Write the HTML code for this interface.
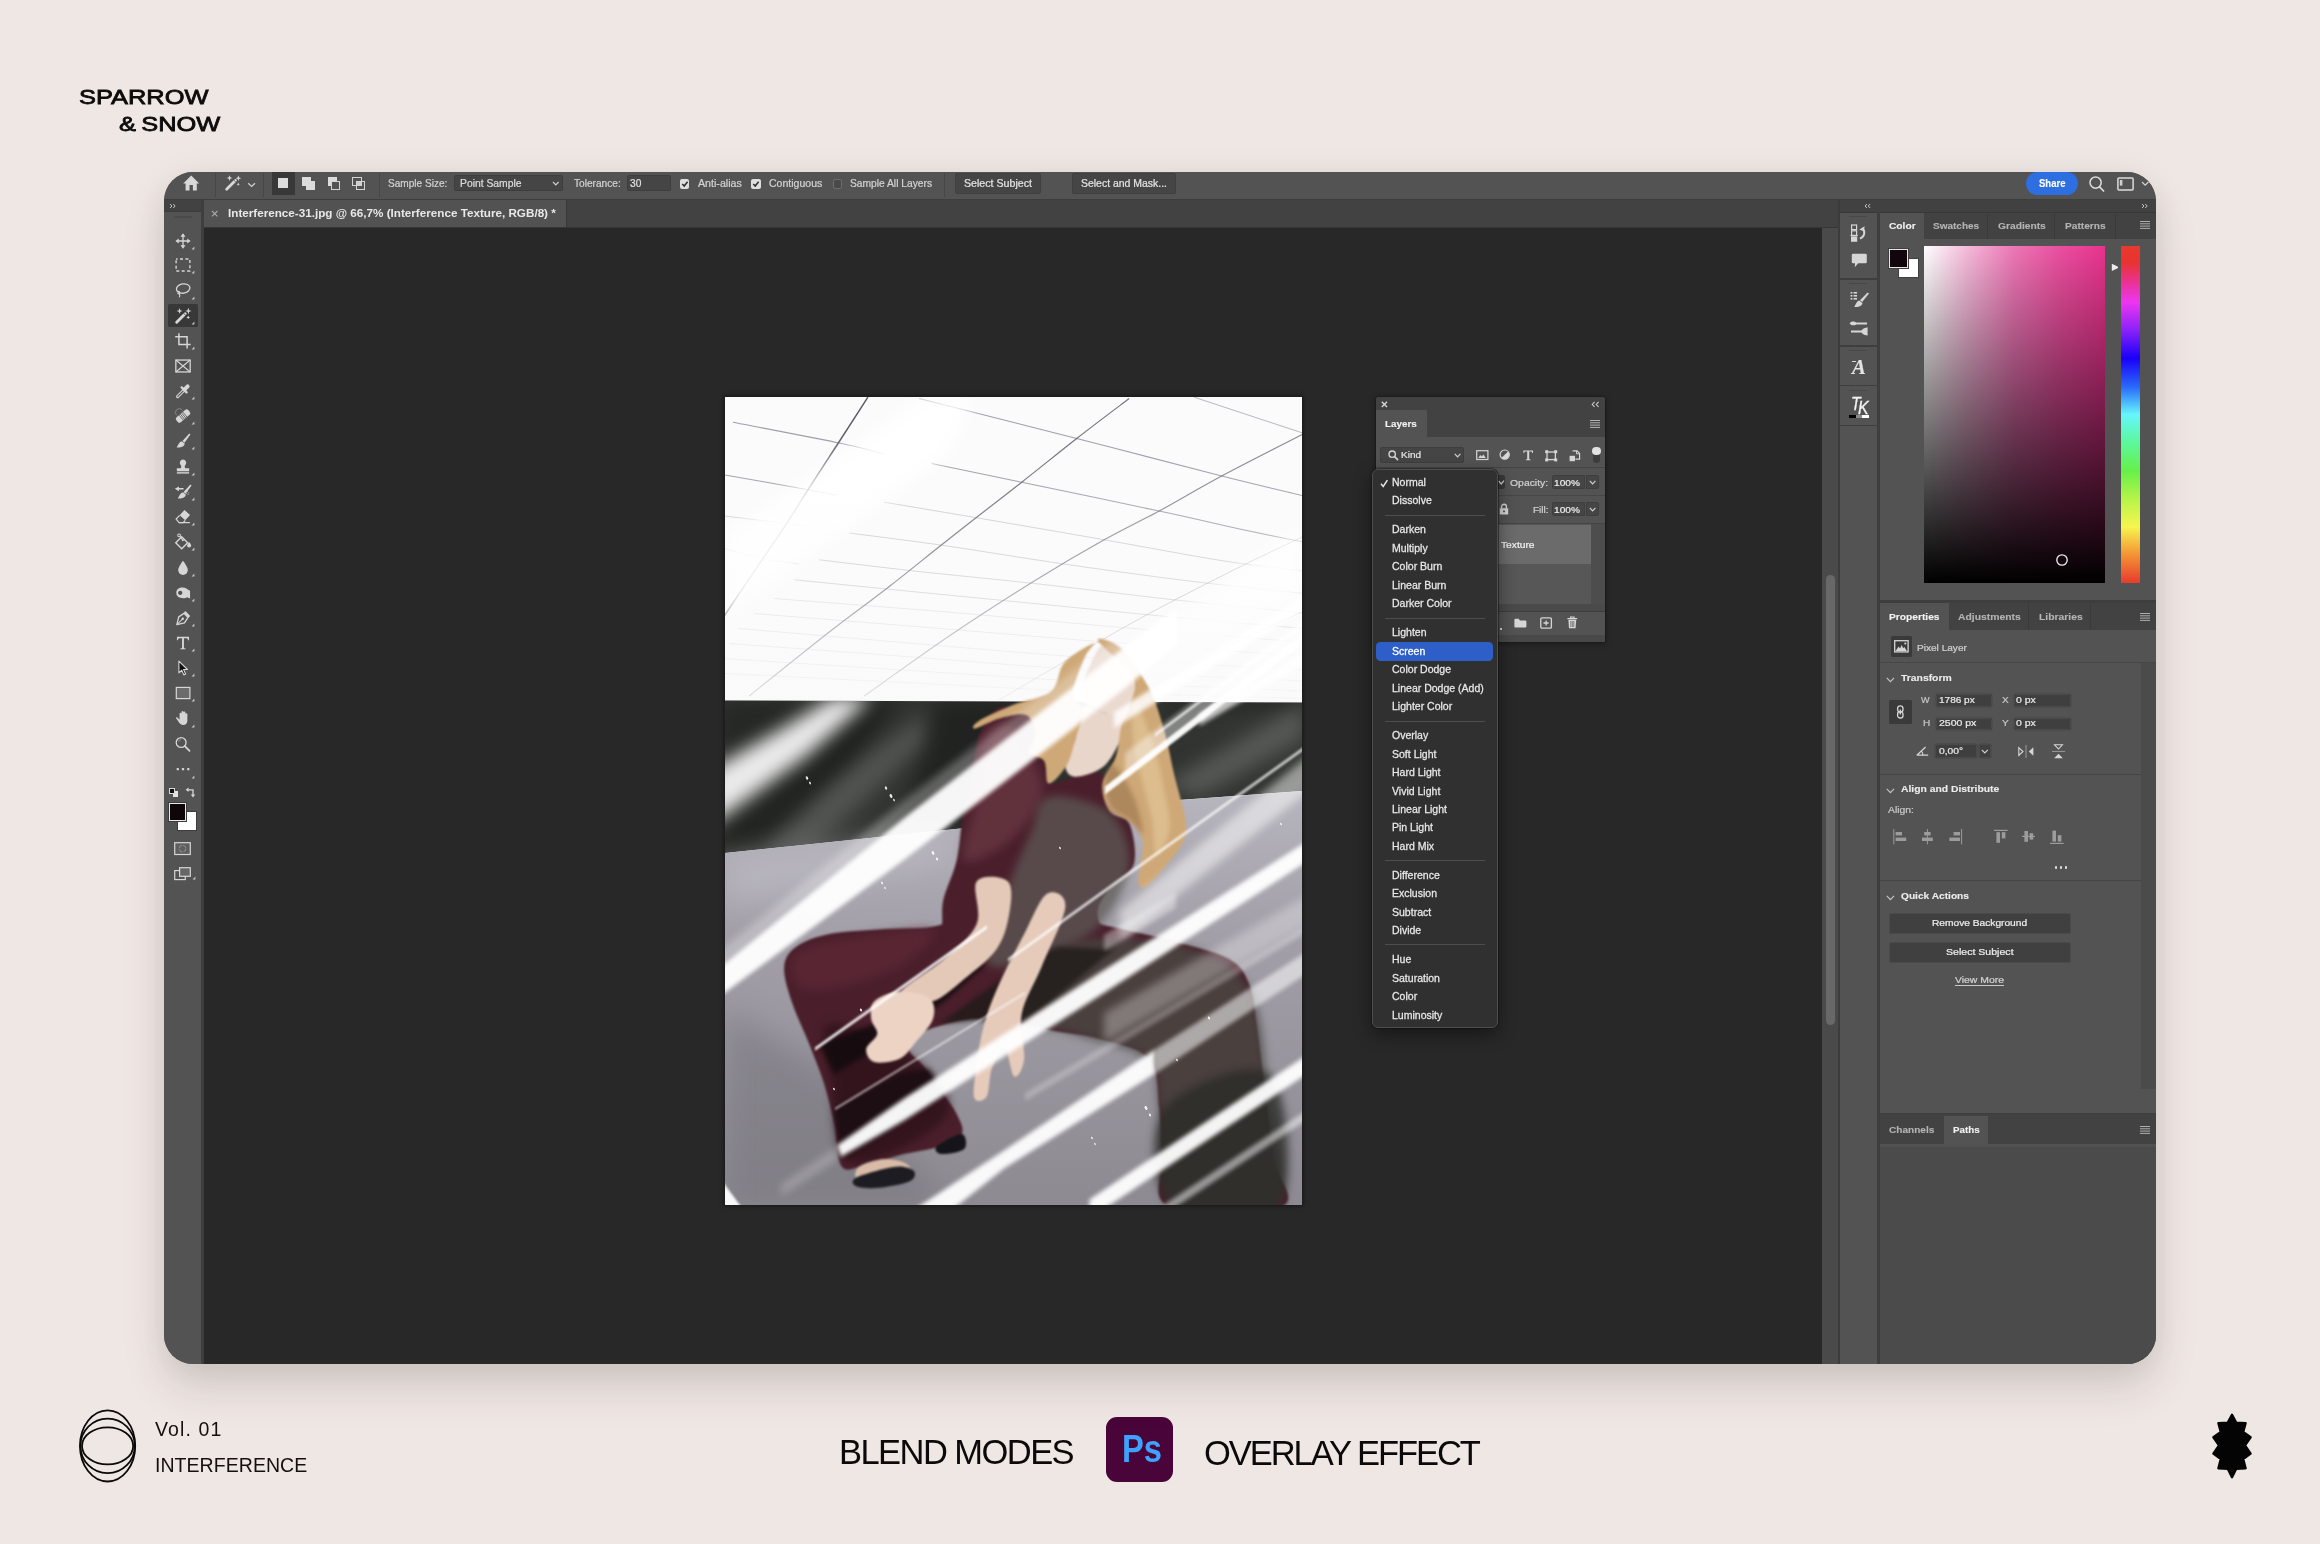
<!DOCTYPE html>
<html><head><meta charset="utf-8"><title>Blend Modes</title>
<style>
*{box-sizing:border-box;margin:0;padding:0}
html,body{width:2320px;height:1544px;overflow:hidden;background:#efe7e4;font-family:"Liberation Sans",sans-serif;}
.abs{position:absolute}
#win{position:absolute;left:164px;top:172px;width:1992px;height:1192px;border-radius:29px;overflow:hidden;background:#535353;}
#shadow{position:absolute;left:164px;top:172px;width:1992px;height:1192px;border-radius:29px;box-shadow:0 24px 42px rgba(52,46,40,.15),0 4px 36px rgba(52,46,40,.07);}
#in{position:absolute;left:-164px;top:-172px;width:2320px;height:1544px;will-change:transform;}
.t{position:absolute;white-space:nowrap;}
svg{overflow:visible}
</style></head><body>
<div class="abs" style="left:0;top:0;width:2320px;height:1544px;will-change:transform">
<div class="abs" style="left:79px;top:85px;font-size:21px;line-height:24px;color:#0d0b0b;white-space:nowrap;-webkit-text-stroke:0.8px #0d0b0b;transform-origin:0 0;transform:scaleX(1.21);">SPARROW</div>
<div class="abs" style="left:119px;top:111.5px;font-size:21px;line-height:24px;color:#0d0b0b;white-space:nowrap;-webkit-text-stroke:0.8px #0d0b0b;transform-origin:0 0;transform:scaleX(1.21);word-spacing:-1.45px">&amp; SNOW</div>
<svg class="abs" style="left:70px;top:1400px" width="80" height="92" viewBox="70 1400 80 92" fill="none" stroke="#0b0909" stroke-width="1.8">
<ellipse cx="107.6" cy="1445.9" rx="27.6" ry="35.6"/>
<ellipse cx="107.6" cy="1445.9" rx="27.2" ry="27.3"/>
<ellipse cx="107.6" cy="1445.9" rx="25.6" ry="18.5"/>
</svg>
<div class="abs" style="left:155px;top:1417px;font-size:19.5px;line-height:24px;color:#14100f;white-space:nowrap;letter-spacing:1.1px">Vol. 01</div>
<div class="abs" style="left:155px;top:1453px;font-size:19.5px;line-height:24px;color:#14100f;white-space:nowrap;letter-spacing:0.05px">INTERFERENCE</div>
<div class="abs" style="left:839px;top:1432px;font-size:34.5px;line-height:40px;color:#0b0909;white-space:nowrap;letter-spacing:-1.55px">BLEND MODES</div>
<div class="abs" style="left:1106px;top:1417px;width:66.5px;height:65px;border-radius:11px;background:#49053a"></div>
<div class="abs" style="left:1121.5px;top:1426.5px;font-size:38px;line-height:44px;font-weight:bold;color:#3fa2ff;white-space:nowrap;transform-origin:0 0;transform:scaleX(.86)">Ps</div>
<div class="abs" style="left:1204px;top:1433px;font-size:34.5px;line-height:40px;color:#0b0909;white-space:nowrap;letter-spacing:-2.05px">OVERLAY EFFECT</div>
<svg class="abs" style="left:2200px;top:1405px" width="64" height="82" viewBox="-32 -41 64 82"><polygon fill="#050404" stroke="#050404" stroke-width="2.4" stroke-linejoin="round" points="0,-31.2 4.2,-23.4 13.6,-22.8 11.2,-14 18.6,-8.8 13,-0.6 18.6,7.6 11.2,13 13.6,22.2 4.2,22.8 0,31.2 -4.2,22.8 -13.6,22.2 -11.2,13 -18.6,7.6 -13,-0.6 -18.6,-8.8 -11.2,-14 -13.6,-22.8 -4.2,-23.4"/></svg>
</div>
<div id="shadow"></div>
<div id="win"><div id="in">
<div class="abs" style="left:164px;top:172px;width:1992px;height:27px;background:#535353;"></div>
<div class="abs" style="left:164px;top:199px;width:1992px;height:1px;background:#3d3d3d;"></div>
<div class="abs" style="left:204px;top:200px;width:1636px;height:28px;background:#424242;"></div>
<div class="abs" style="left:204px;top:226.8px;width:1636px;height:1.6px;background:#363636;"></div>
<div class="abs" style="left:204px;top:228px;width:1618px;height:1136px;background:#282828;"></div>
<div class="abs" style="left:164px;top:200px;width:37px;height:1164px;background:#535353;"></div>
<div class="abs" style="left:164px;top:200px;width:37px;height:11px;background:#424242;"></div>
<div class="abs" style="left:164px;top:211px;width:37px;height:1px;background:#3b3b3b;"></div>
<div class="abs" style="left:174px;top:216px;width:18px;height:1.5px;background:#4a4a4a;"></div>
<div class="abs" style="left:201px;top:200px;width:3px;height:1164px;background:#3e3e3e;"></div>
<div class="abs" style="left:1822px;top:228px;width:16px;height:1136px;background:#4a4a4a;"></div>
<div class="abs" style="left:1838px;top:200px;width:2px;height:1164px;background:#3c3c3c;"></div>
<div class="abs" style="left:1825.6px;top:575.4px;width:9.8px;height:450px;background:#686868;border-radius:5px"></div>
<div class="abs" style="left:1840px;top:200px;width:37px;height:1164px;background:#535353;"></div>
<div class="abs" style="left:1877px;top:200px;width:3px;height:1164px;background:#3e3e3e;"></div>
<div class="abs" style="left:1880px;top:200px;width:276px;height:1164px;background:#535353;"></div>
<svg class="abs" style="left:169px;top:203px;" width="8" height="6" viewBox="0 0 8 6"><path d="M1 1 L3 3 L1 5 M4.2 1 L6.2 3 L4.2 5" fill="none" stroke="#c4c4c4" stroke-width="1"/></svg>
<div class="abs" style="left:215px;top:173px;width:1px;height:24px;background:#474747;"></div>
<div class="abs" style="left:263px;top:173px;width:1px;height:24px;background:#474747;"></div>
<div class="abs" style="left:378.5px;top:173px;width:1px;height:24px;background:#474747;"></div>
<div class="abs" style="left:943.5px;top:173px;width:1px;height:24px;background:#474747;"></div>
<svg class="abs" style="left:181px;top:174px;" width="20" height="18" viewBox="0 0 20 18"><path d="M10.2 1.6 L18.2 9.4 L15.8 9.4 L15.8 16.6 L11.9 16.6 L11.9 11 L8.5 11 L8.5 16.6 L4.6 16.6 L4.6 9.4 L2.2 9.4 Z" fill="#d8d8d8"/></svg>
<svg class="abs" style="left:222.5px;top:173px;" width="20" height="20" viewBox="0 0 20 20"><g transform="translate(10 10) scale(0.93) translate(-10 -10)"><path d="M3.2 16.8 L12.6 7.4" stroke="#d8d8d8" stroke-width="3" stroke-linecap="round" fill="none"/><path d="M11.2 7.2 L12.6 8.6" stroke="#535353" stroke-width="0.9" stroke-linecap="round"/><path d="M6.3 1.6 L7.1 3.9 L9.4 4.7 L7.1 5.5 L6.3 7.8 L5.5 5.5 L3.2 4.7 L5.5 3.9Z M15.8 1.8 L16.6 4 L18.8 4.8 L16.6 5.6 L15.8 7.8 L15 5.6 L12.8 4.8 L15 4Z M15.6 9.6 L16.1 10.9 L17.4 11.4 L16.1 11.9 L15.6 13.2 L15.1 11.9 L13.8 11.4 L15.1 10.9Z" fill="#d8d8d8"/></g></svg>
<svg class="abs" style="left:247px;top:182px;" width="10" height="6" viewBox="0 0 10 6"><path d="M1.2 1.2 L4.6 4.4 L8 1.2" fill="none" stroke="#d0d0d0" stroke-width="1.3"/></svg>
<div class="abs" style="left:272px;top:172px;width:23px;height:23px;background:#383838;"></div>
<div class="abs" style="left:278.3px;top:178.4px;width:9.8px;height:9.8px;background:#dcdcdc;"></div>
<div class="abs" style="left:301.9px;top:177px;width:9.3px;height:9.3px;background:#dcdcdc;"></div>
<div class="abs" style="left:305.8px;top:180.9px;width:9px;height:9px;background:#dcdcdc;"></div>
<div class="abs" style="left:327.5px;top:177px;width:9.3px;height:9.3px;background:#dcdcdc;"></div>
<div class="abs" style="left:331px;top:180.9px;width:9px;height:9px;background:#535353;border:1.3px solid #d4d4d4"></div>
<div class="abs" style="left:352.4px;top:177px;width:9.3px;height:9.3px;background:transparent;border:1.3px solid #d4d4d4"></div>
<div class="abs" style="left:355.8px;top:180.9px;width:9.4px;height:9px;background:transparent;border:1.3px solid #d4d4d4"></div>
<div class="abs" style="left:357px;top:182px;width:4px;height:3.6px;background:#cfcfcf;"></div>
<div class="t" style="left:388.00px;top:178.84px;font-size:9.99px;line-height:9.99px;color:#d2d2d2;transform-origin:0 0;transform:scaleX(1.0091);-webkit-text-stroke:0.22px #d2d2d2;">Sample Size:</div>
<div class="abs" style="left:454.3px;top:175.3px;width:108.8px;height:16.2px;background:#454545;border:1px solid #3d3d3d;border-radius:2px"></div>
<div class="t" style="left:459.50px;top:178.84px;font-size:9.99px;line-height:9.99px;color:#dcdcdc;transform-origin:0 0;transform:scaleX(1.0349);-webkit-text-stroke:0.22px #dcdcdc;">Point Sample</div>
<svg class="abs" style="left:552px;top:181px;" width="8" height="6" viewBox="0 0 8 6"><path d="M1 1 L3.8 3.8 L6.6 1" fill="none" stroke="#d0d0d0" stroke-width="1.2"/></svg>
<div class="t" style="left:573.90px;top:178.84px;font-size:9.99px;line-height:9.99px;color:#d2d2d2;transform-origin:0 0;transform:scaleX(1.0152);-webkit-text-stroke:0.22px #d2d2d2;">Tolerance:</div>
<div class="abs" style="left:626.7px;top:175.3px;width:44.5px;height:16.2px;background:#454545;border:1px solid #3d3d3d;border-radius:2px"></div>
<div class="t" style="left:629.50px;top:178.84px;font-size:9.99px;line-height:9.99px;color:#e0e0e0;transform-origin:0 0;transform:scaleX(1.0155);-webkit-text-stroke:0.22px #e0e0e0;">30</div>
<div class="abs" style="left:679.9px;top:179px;width:9.6px;height:9.6px;background:#dedede;border-radius:2px"></div><svg class="abs" style="left:679.9px;top:179px;" width="10" height="10" viewBox="0 0 10 10"><path d="M2.3 5 L4.2 7 L7.6 2.8" fill="none" stroke="#2a2a2a" stroke-width="1.5"/></svg>
<div class="t" style="left:697.70px;top:178.84px;font-size:9.99px;line-height:9.99px;color:#d2d2d2;transform-origin:0 0;transform:scaleX(1.0659);-webkit-text-stroke:0.22px #d2d2d2;">Anti-alias</div>
<div class="abs" style="left:751.4px;top:179px;width:9.6px;height:9.6px;background:#dedede;border-radius:2px"></div><svg class="abs" style="left:751.4px;top:179px;" width="10" height="10" viewBox="0 0 10 10"><path d="M2.3 5 L4.2 7 L7.6 2.8" fill="none" stroke="#2a2a2a" stroke-width="1.5"/></svg>
<div class="t" style="left:768.90px;top:178.84px;font-size:9.99px;line-height:9.99px;color:#d2d2d2;transform-origin:0 0;transform:scaleX(1.0545);-webkit-text-stroke:0.22px #d2d2d2;">Contiguous</div>
<div class="abs" style="left:832.6px;top:179px;width:9.6px;height:9.6px;background:#4a4a4a;border:1px solid #6c6c6c;border-radius:2px"></div>
<div class="t" style="left:850.20px;top:178.84px;font-size:9.99px;line-height:9.99px;color:#d2d2d2;transform-origin:0 0;transform:scaleX(1.0266);-webkit-text-stroke:0.22px #d2d2d2;">Sample All Layers</div>
<div class="abs" style="left:955.2px;top:173.2px;width:85.6px;height:20.4px;background:#454545;border:1px solid #404040;border-radius:2px"></div>
<div class="t" style="left:964.00px;top:178.84px;font-size:9.99px;line-height:9.99px;color:#e2e2e2;transform-origin:0 0;transform:scaleX(1.0647);-webkit-text-stroke:0.22px #e2e2e2;">Select Subject</div>
<div class="abs" style="left:1072px;top:173.2px;width:104.3px;height:20.4px;background:#454545;border:1px solid #404040;border-radius:2px"></div>
<div class="t" style="left:1081.20px;top:178.84px;font-size:9.99px;line-height:9.99px;color:#e2e2e2;transform-origin:0 0;transform:scaleX(1.0464);-webkit-text-stroke:0.22px #e2e2e2;">Select and Mask...</div>
<div class="abs" style="left:2026.4px;top:171.6px;width:52px;height:23.4px;background:#2d6fe0;border-radius:12px"></div>
<div class="t" style="left:2039.15px;top:178.66px;font-size:10.09px;line-height:10.09px;color:#ffffff;transform-origin:0 0;transform:scaleX(0.9451);font-weight:bold;-webkit-text-stroke:0.12px #ffffff;">Share</div>
<svg class="abs" style="left:2086px;top:173px;" width="22" height="22" viewBox="0 0 22 22"><circle cx="9.6" cy="9.6" r="5.6" fill="none" stroke="#dcdcdc" stroke-width="1.5"/><path d="M13.6 13.8 L17.6 18" stroke="#dcdcdc" stroke-width="1.7" stroke-linecap="round"/></svg>
<svg class="abs" style="left:2117px;top:176.6px;" width="18" height="14" viewBox="0 0 18 14"><rect x="0.9" y="0.9" width="15.2" height="12" rx="1" fill="none" stroke="#dcdcdc" stroke-width="1.5"/><rect x="2.8" y="3" width="2.6" height="5.6" fill="#cfcfcf"/></svg>
<svg class="abs" style="left:2141px;top:181px;" width="10" height="6" viewBox="0 0 10 6"><path d="M1 1 L4.2 4.2 L7.4 1" fill="none" stroke="#d0d0d0" stroke-width="1.3"/></svg>
<div class="abs" style="left:204px;top:200.4px;width:361.6px;height:26.6px;background:#525252;"></div>
<div class="abs" style="left:565.6px;top:200px;width:1px;height:28px;background:#383838;"></div>
<svg class="abs" style="left:209.5px;top:208.5px;" width="10" height="10" viewBox="0 0 10 10"><path d="M2 2 L7.4 7.4 M7.4 2 L2 7.4" stroke="#a8a8a8" stroke-width="1.1"/></svg>
<div class="t" style="left:227.60px;top:208.40px;font-size:11.10px;line-height:11.10px;color:#e8e8e8;transform-origin:0 0;transform:scaleX(1.0524);font-weight:bold;">Interference-31.jpg @ 66,7% (Interference Texture, RGB/8) *</div>
<div class="abs" style="left:723.8px;top:396.0px;width:579.2px;height:810.0px;background:#1d1d1d;box-shadow:0 0 4px rgba(0,0,0,.5)"></div><svg class="abs" style="left:724.8px;top:397.0px;overflow:hidden" width="577.2" height="808.0" viewBox="0 0 577.2 808.0"><defs>
<filter color-interpolation-filters="sRGB" id="b1" x="-10%" y="-10%" width="120%" height="120%"><feGaussianBlur stdDeviation="1"/></filter>
<filter color-interpolation-filters="sRGB" id="b2" x="-10%" y="-10%" width="120%" height="120%"><feGaussianBlur stdDeviation="2.2"/></filter>
<filter color-interpolation-filters="sRGB" id="b4" x="-20%" y="-20%" width="140%" height="140%"><feGaussianBlur stdDeviation="4.5"/></filter>
<filter color-interpolation-filters="sRGB" id="b8" x="-30%" y="-30%" width="160%" height="160%"><feGaussianBlur stdDeviation="9"/></filter>
<filter color-interpolation-filters="sRGB" id="b14" x="-40%" y="-40%" width="180%" height="180%"><feGaussianBlur stdDeviation="15"/></filter>
<filter id="gr" x="0" y="0" width="100%" height="100%"><feTurbulence type="fractalNoise" baseFrequency="0.9" numOctaves="2" seed="4"/><feColorMatrix values="0 0 0 0 .5  0 0 0 0 .5  0 0 0 0 .5  0 0 0 .55 0"/><feComposite in2="SourceGraphic" operator="in"/></filter>
<linearGradient id="flr" x1="0" y1="0" x2="0" y2="1"><stop offset="0" stop-color="#b7b5bd"/><stop offset=".35" stop-color="#a29fa8"/><stop offset="1" stop-color="#8d8a92"/></linearGradient>
<linearGradient id="wallg" x1="0" y1="0" x2="1" y2="0"><stop offset="0" stop-color="#3a3d39"/><stop offset=".5" stop-color="#2b2e2b"/><stop offset="1" stop-color="#343733"/></linearGradient>
<clipPath id="pc"><rect x="0" y="0" width="577.2" height="808"/></clipPath><clipPath id="wc"><polygon points="0,303.5 577.2,305.5 577.2,394 440,404 250,430 0,456"/></clipPath>
</defs>
<g clip-path="url(#pc)">
<rect x="0" y="0" width="577.2" height="808" fill="#fbfbfc"/>
<path d="M142.9 0.2 C137.9 8.0 123.0 31.1 113.0 46.5 C103.0 61.9 91.5 79.4 83.0 92.8 C74.4 106.1 69.2 115.0 61.7 126.5 C54.2 138.0 48.4 146.1 38.0 161.5 C27.5 176.9 5.7 209.4 -0.8 219.0" fill="none" stroke="#3d3d4a" stroke-opacity="0.85" stroke-width="1.5"/>
<path d="M404.2 1.5 C395.4 8.2 369.6 27.5 351.7 41.5 C333.8 55.5 313.4 72.1 296.7 85.2 C280.0 98.4 265.0 109.8 251.7 120.2 C238.4 130.7 231.7 135.9 216.7 147.8 C201.7 159.6 181.3 176.3 161.7 191.5 C142.1 206.7 122.1 221.1 99.2 239.0 C76.3 256.9 36.7 289.0 24.2 299.0" fill="none" stroke="#3d3d4a" stroke-opacity="0.7" stroke-width="1.2"/>
<path d="M579.2 36.5 C565.5 43.6 520.9 66.1 496.7 79.0 C472.5 91.9 453.8 103.4 434.2 114.0 C414.6 124.6 400.0 131.1 379.2 142.8 C358.4 154.4 335.0 168.0 309.2 184.0 C283.4 200.0 252.5 219.8 224.2 239.0 C195.9 258.2 153.4 289.0 139.2 299.0" fill="none" stroke="#3d3d4a" stroke-opacity="0.6" stroke-width="1.1"/>
<path d="M579.2 139.0 C568.0 144.4 537.5 158.6 511.7 171.5 C485.9 184.4 451.3 201.9 424.2 216.5 C397.1 231.1 374.2 244.6 349.2 259.0 C324.2 273.4 286.7 295.5 274.2 302.8" fill="none" stroke="#3d3d4a" stroke-opacity="0.35" stroke-width="0.9"/>
<path d="M579.2 214.0 C565.9 220.2 528.4 236.7 499.2 251.5 C470.0 266.3 420.0 294.2 404.2 302.8" fill="none" stroke="#3d3d4a" stroke-opacity="0.3" stroke-width="0.8"/>
<path d="M8.0 25.2 C26.1 28.8 91.5 41.2 116.7 46.5 C141.9 51.8 152.1 55.2 159.2 57.0" fill="none" stroke="#55556a" stroke-opacity="0.55" stroke-width="1.1"/>
<path d="M194.2 1.5 C220.4 8.2 301.3 28.6 351.7 41.5 C402.1 54.4 458.8 69.4 496.7 79.0 C534.6 88.6 565.5 95.7 579.2 99.0" fill="none" stroke="#55556a" stroke-opacity="0.55" stroke-width="1.1"/>
<path d="M469.2 0.2 L579.2 36.5" fill="none" stroke="#55556a" stroke-opacity=".45" stroke-width=".9"/>
<path d="M-0.8 77.8 C13.2 80.2 64.2 89.3 83.0 92.8 C101.7 96.2 106.9 97.3 111.7 98.2" fill="none" stroke="#55556a" stroke-opacity="0.55" stroke-width="1.1"/>
<path d="M206.7 66.5 C221.7 69.6 258.8 77.3 296.7 85.2 C334.6 93.2 396.3 105.9 434.2 114.0 C472.1 122.1 500.0 128.8 524.2 134.0 C548.4 139.2 570.0 143.4 579.2 145.2" fill="none" stroke="#55556a" stroke-opacity="0.55" stroke-width="1.1"/>
<path d="M-0.8 119.0 C9.6 120.2 48.0 124.8 61.7 126.5 C75.5 128.2 78.4 128.6 81.7 129.0" fill="none" stroke="#55556a" stroke-opacity="0.33" stroke-width="0.8"/>
<path d="M159.2 105.2 C174.6 107.8 215.0 114.5 251.7 120.8 C288.4 127.0 337.9 135.5 379.2 142.8 C420.4 150.0 465.9 158.8 499.2 164.0 C532.5 169.2 565.9 172.3 579.2 174.0" fill="none" stroke="#55556a" stroke-opacity="0.33" stroke-width="0.8"/>
<path d="M124.2 136.0 C139.6 138.0 180.0 143.0 216.7 148.2 C253.4 153.5 301.3 161.6 344.2 167.8 C387.1 173.9 435.0 180.5 474.2 185.2 C513.4 190.0 561.7 194.6 579.2 196.5" fill="none" stroke="#55556a" stroke-opacity="0.33" stroke-width="0.8"/>
<path d="M-0.8 151.5 C5.7 153.2 25.5 158.9 38.0 161.5 C50.5 164.1 68.2 166.1 74.2 167.0" fill="none" stroke="#55556a" stroke-opacity="0.33" stroke-width="0.8"/>
<path d="M94.2 162.8 C110.0 164.6 153.4 170.0 189.2 174.0 C225.0 178.0 265.9 181.7 309.2 186.5 C352.5 191.3 404.2 197.8 449.2 202.8 C494.2 207.7 557.5 213.8 579.2 216.0" fill="none" stroke="#55556a" stroke-opacity="0.33" stroke-width="0.8"/>
<path d="M69.2 182.8 C84.6 184.3 121.7 188.0 161.7 192.0 C201.7 196.0 261.3 201.8 309.2 206.5 C357.1 211.2 404.2 216.1 449.2 220.2 C494.2 224.4 557.5 229.6 579.2 231.5" fill="none" stroke="#55556a" stroke-opacity="0.33" stroke-width="0.8"/>
<path d="M49.2 201.5 C78.4 203.8 161.7 210.0 224.2 215.2 C286.7 220.5 365.0 227.8 424.2 232.8 C483.4 237.8 553.4 243.2 579.2 245.2" fill="none" stroke="#55556a" stroke-opacity="0.2" stroke-width="0.8"/>
<path d="M29.2 216.5 C57.5 218.8 137.5 225.2 199.2 230.2 C260.9 235.2 335.9 241.7 399.2 246.5 C462.5 251.3 549.2 256.9 579.2 259.0" fill="none" stroke="#55556a" stroke-opacity="0.2" stroke-width="0.8"/>
<path d="M14.2 231.5 C40.9 233.8 114.2 240.2 174.2 245.2 C234.2 250.2 306.7 256.9 374.2 261.5 C441.7 266.1 545.0 270.9 579.2 272.8" fill="none" stroke="#55556a" stroke-opacity="0.2" stroke-width="0.8"/>
<path d="M4.2 246.5 C32.5 248.6 112.5 254.4 174.2 259.0 C235.9 263.6 306.7 269.8 374.2 274.0 C441.7 278.2 545.0 282.3 579.2 284.0" fill="none" stroke="#55556a" stroke-opacity="0.2" stroke-width="0.8"/>
<path d="M-0.8 261.5 C28.4 263.4 111.7 268.8 174.2 272.8 C236.7 276.7 306.7 281.7 374.2 285.2 C441.7 288.8 545.0 292.5 579.2 294.0" fill="none" stroke="#55556a" stroke-opacity="0.2" stroke-width="0.8"/>
<path d="M-0.8 276.5 C28.4 278.0 111.7 282.1 174.2 285.2 C236.7 288.4 306.7 292.5 374.2 295.2 C441.7 298.0 545.0 300.5 579.2 301.5" fill="none" stroke="#55556a" stroke-opacity="0.2" stroke-width="0.8"/>
<g filter="url(#b8)" opacity=".9"><polygon points="-0.8,139.0 -0.8,224.0 224.2,56.5 249.2,-1.0 199.2,-1.0" fill="#fff"/><polygon points="324.2,302.8 424.2,302.8 579.2,196.5 579.2,129.0" fill="#fff"/><polygon points="461.7,302.8 524.2,302.8 579.2,269.0 579.2,236.5" fill="#fff"/></g>
<linearGradient id="cf" x1="0" y1="0" x2="0" y2="1"><stop offset="0" stop-color="#fbfbfc" stop-opacity="0"/><stop offset=".45" stop-color="#fbfbfc" stop-opacity=".25"/><stop offset="1" stop-color="#fafafb" stop-opacity=".8"/></linearGradient><rect x="0" y="60" width="577.2" height="245" fill="url(#cf)"/>
<polygon points="0,303.5 577.2,305.5 577.2,394 440,404 250,430 0,456" fill="url(#wallg)"/>
<g clip-path="url(#wc)"><g filter="url(#b8)">
<polygon points="-16.3,374.6 -16.3,429.0 80.8,359.1 146.9,300.7 108.0,300.7 57.5,331.8" fill="#f4f4f4" opacity=".95"/>
<polygon points="28.4,452.3 86.7,452.3 199.2,347.4 199.2,316.3 115.8,378.5" fill="#6e706e" opacity=".5"/>
<polygon points="-8.6,432.9 -8.6,456.2 38.1,452.3 123.6,370.7 174.1,304.6 146.9,302.7 80.8,362.9" fill="#0c0d0c" opacity=".5"/>
<polygon points="-8.6,300.7 -8.6,366.8 57.5,328.0 100.3,300.7" fill="#0e0f0e" opacity=".45"/>
<polygon points="174.1,436.8 290.7,429.0 290.7,304.6 213.0,304.6" fill="#0e0f0e" opacity=".4"/>
<polygon points="436.7,388.0 579.2,305.5 579.2,340.5 474.2,400.5" fill="#777977" opacity=".5"/>
<polygon points="444.2,313.0 579.2,308.0 579.2,298.0 444.2,305.5" fill="#101110" opacity=".5"/>
</g></g>
<polygon points="0,456 250,430 440,404 577.2,394 577.2,808 0,808" fill="url(#flr)"/>
<g filter="url(#b14)"><polygon points="-0.8,612.0 -0.8,811.0 224.2,811.0 124.2,687.0" fill="#77757c" opacity=".55"/><polygon points="-0.8,463.0 -0.8,508.0 224.2,463.0 224.2,438.0" fill="#c4c2ca" opacity=".5"/></g><g filter="url(#b1)"><path d="M214.2 528.2 C199.2 532.4 177.5 530.5 159.2 532.0 C140.9 533.5 118.8 534.1 104.2 537.0 C89.6 539.9 79.2 544.1 71.7 549.5 C64.2 554.9 60.0 560.3 59.2 569.5 C58.4 578.7 62.5 591.6 66.7 604.5 C70.9 617.4 78.8 633.2 84.2 647.0 C89.6 660.8 95.0 673.7 99.2 687.0 C103.4 700.3 106.3 713.2 109.2 727.0 C112.1 740.8 111.7 762.6 116.7 769.5 C121.7 776.4 129.6 770.1 139.2 768.2 C148.8 766.4 161.7 761.4 174.2 758.2 C186.7 755.1 203.8 753.0 214.2 749.5 C224.6 746.0 233.8 742.4 236.7 737.0 C239.6 731.6 235.0 724.1 231.7 717.0 C228.4 709.9 222.1 702.4 216.7 694.5 C211.3 686.6 204.6 676.6 199.2 669.5 C193.8 662.4 184.2 657.8 184.2 652.0 C184.2 646.2 188.4 639.5 199.2 634.5 C210.0 629.5 232.9 623.2 249.2 622.0 C265.4 620.8 282.9 624.9 296.7 627.0 C310.4 629.1 318.8 632.0 331.7 634.5 C344.6 637.0 358.8 637.4 374.2 642.0 C389.6 646.6 414.2 650.3 424.2 662.0 C434.2 673.7 432.1 695.3 434.2 712.0 C436.3 728.7 435.0 745.8 436.7 762.0 C438.4 778.2 424.2 801.6 444.2 809.5 C464.2 817.4 539.2 817.4 556.7 809.5 C574.2 801.6 552.1 782.4 549.2 762.0 C546.3 741.6 542.1 709.5 539.2 687.0 C536.3 664.5 534.2 643.7 531.7 627.0 C529.2 610.3 528.8 597.8 524.2 587.0 C519.6 576.2 516.7 569.1 504.2 562.0 C491.7 554.9 467.1 549.5 449.2 544.5 C431.3 539.5 410.0 535.3 396.7 532.0 C383.4 528.7 381.3 529.5 369.2 524.5 C357.1 519.5 344.2 504.9 324.2 502.0 C304.2 499.1 267.5 502.6 249.2 507.0 C230.9 511.4 229.2 524.1 214.2 528.2Z" fill="#4a1f2b"/>
<path d="M274.4 310.2 C266.9 312.9 260.6 324.4 256.4 332.7 C252.3 340.9 252.7 346.1 249.7 359.6 C246.7 373.0 241.5 396.2 238.5 413.3 C235.5 430.5 235.1 447.7 231.8 462.7 C228.4 477.6 221.0 491.0 218.3 503.0 C215.7 515.0 218.7 525.4 216.1 534.4 C213.5 543.3 195.2 552.0 202.6 556.8 C210.1 561.6 236.3 562.0 260.9 563.1 C285.6 564.1 328.2 564.9 350.6 563.1 C373.0 561.3 390.9 557.5 395.4 552.3 C399.9 547.2 381.2 538.9 377.5 532.1 C373.7 525.4 371.5 519.1 373.0 512.0 C374.5 504.9 380.5 497.0 386.4 489.6 C392.4 482.1 405.9 477.6 408.9 467.1 C411.8 456.7 408.5 435.8 404.4 426.8 C400.3 417.8 388.7 421.6 384.2 413.3 C379.7 405.1 383.1 383.1 377.5 377.5 C371.9 371.9 359.5 378.2 350.6 379.7 C341.6 381.2 328.9 389.1 323.7 386.4 C318.5 383.8 322.6 369.3 319.2 364.0 C315.8 358.8 305.0 359.6 303.5 355.1 C302.0 350.6 310.6 343.5 310.2 337.1 C309.9 330.8 307.2 321.4 301.3 317.0 C295.3 312.5 281.8 307.6 274.4 310.2Z" fill="#4a1f2b"/>
<g filter="url(#b4)"><path d="M260.9 337.1 C255.7 349.1 255.7 379.0 252.0 399.9 C248.2 420.8 233.3 455.2 238.5 462.7 C243.7 470.1 270.3 455.2 283.3 444.7 C296.4 434.3 313.2 414.1 317.0 399.9 C320.7 385.7 311.4 371.5 305.8 359.6 C300.2 347.6 290.8 331.9 283.3 328.2 C275.9 324.4 266.2 325.2 260.9 337.1Z" fill="#6b3945" opacity=".7"/></g>
<g filter="url(#b4)"><path d="M74.2 554.5 C88.0 546.2 131.7 540.3 154.2 537.0 C176.7 533.7 205.9 529.1 209.2 534.5 C212.5 539.9 191.7 559.9 174.2 569.5 C156.7 579.1 121.3 589.1 104.2 592.0 C87.1 594.9 76.7 593.2 71.7 587.0 C66.7 580.8 60.5 562.8 74.2 554.5Z" fill="#5c2735" opacity=".8"/><path d="M104.2 627.0 C118.0 622.8 169.2 647.8 189.2 662.0 C209.2 676.2 226.7 697.0 224.2 712.0 C221.7 727.0 191.7 743.7 174.2 752.0 C156.7 760.3 130.4 772.8 119.2 762.0 C108.0 751.2 109.2 709.5 106.7 687.0 C104.2 664.5 90.5 631.2 104.2 627.0Z" fill="#2c1219" opacity=".75"/></g>
<path d="M357.3 310.2 C362.9 306.1 376.4 317.3 384.2 317.0 C392.0 316.6 402.1 304.6 404.4 308.0 C406.6 311.4 401.8 327.1 397.7 337.1 C393.5 347.2 387.6 361.4 379.7 368.5 C371.9 375.6 357.1 379.7 350.6 379.7 C344.0 379.7 340.5 374.9 340.5 368.5 C340.5 362.2 347.8 351.3 350.6 341.6 C353.4 331.9 351.7 314.4 357.3 310.2Z" fill="#e9d6cb"/>
<path d="M370.8 256.4 C375.2 248.2 377.5 248.2 382.0 247.5 C386.4 246.7 392.4 247.1 397.7 252.0 C402.9 256.8 411.5 266.9 413.3 276.6 C415.2 286.3 413.0 303.3 408.9 310.2 C404.7 317.2 395.8 318.1 388.7 318.1 C381.6 318.1 371.9 313.8 366.3 310.2 C360.7 306.7 354.3 305.8 355.1 296.8 C355.8 287.8 366.3 264.7 370.8 256.4Z" fill="#ead9cf"/>
<path d="M134.2 769.5 C138.8 766.2 151.3 762.4 159.2 762.0 C167.1 761.6 177.5 764.1 181.7 767.0 C185.9 769.9 189.6 776.2 184.2 779.5 C178.8 782.8 157.9 786.6 149.2 787.0 C140.4 787.4 134.2 784.9 131.7 782.0 C129.2 779.1 129.6 772.8 134.2 769.5Z" fill="#d9bba8"/>
<path d="M129.2 782.0 C132.1 779.5 141.7 776.6 149.2 774.5 C156.7 772.4 167.5 769.5 174.2 769.5 C180.9 769.5 187.5 772.0 189.2 774.5 C190.9 777.0 190.0 781.8 184.2 784.5 C178.4 787.2 162.9 789.9 154.2 790.8 C145.4 791.6 135.9 791.0 131.7 789.5 C127.5 788.0 126.3 784.5 129.2 782.0Z" fill="#1d1c22"/>
<path d="M211.7 749.5 C215.0 746.2 232.1 736.6 236.7 737.0 C241.3 737.4 242.5 748.7 239.2 752.0 C235.9 755.3 221.3 757.4 216.7 757.0 C212.1 756.6 208.4 752.8 211.7 749.5Z" fill="#15141a"/>
<path d="M368.5 246.4 C365.2 247.1 346.5 257.4 339.4 265.4 C332.3 273.4 334.5 287.5 325.9 294.6 C317.3 301.6 299.8 303.1 287.8 308.0 C275.9 312.9 260.6 319.8 254.2 323.7 C247.9 327.6 246.4 331.9 249.7 331.5 C253.1 331.2 265.8 323.7 274.4 321.4 C283.0 319.2 295.3 315.5 301.3 318.1 C307.2 320.7 309.9 331.0 310.2 337.1 C310.6 343.3 302.0 350.6 303.5 355.1 C305.0 359.6 315.8 358.8 319.2 364.0 C322.6 369.3 319.9 385.7 323.7 386.4 C327.4 387.2 337.1 376.0 341.6 368.5 C346.1 361.0 348.0 350.6 350.6 341.6 C353.2 332.7 357.7 322.6 357.3 314.7 C356.9 306.9 348.0 303.5 348.3 294.6 C348.7 285.6 356.2 269.0 359.5 260.9 C362.9 252.9 371.9 245.6 368.5 246.4Z" fill="#cfa877"/>
<path d="M373.0 244.1 C370.2 238.9 384.9 243.6 390.9 247.5 C396.9 251.4 402.9 259.4 408.9 267.7 C414.8 275.9 421.6 285.2 426.8 296.8 C432.0 308.4 436.5 323.7 440.2 337.1 C444.0 350.6 445.8 363.3 449.2 377.5 C452.6 391.7 458.9 411.1 460.4 422.3 C461.9 433.5 461.5 436.9 458.2 444.7 C454.8 452.6 446.2 462.1 440.2 469.4 C434.3 476.7 426.8 485.8 422.3 488.4 C417.8 491.0 414.1 492.4 413.3 485.1 C412.6 477.8 419.3 454.8 417.8 444.7 C416.3 434.6 410.0 429.8 404.4 424.6 C398.8 419.3 388.7 419.7 384.2 413.3 C379.7 407.0 376.4 395.4 377.5 386.4 C378.6 377.5 387.8 369.3 390.9 359.6 C394.1 349.8 394.1 336.8 396.5 328.2 C399.0 319.6 403.6 316.2 405.5 308.0 C407.4 299.8 413.2 289.5 407.7 278.9 C402.3 268.2 375.8 249.4 373.0 244.1Z" fill="#cfa877"/>
<g filter="url(#b2)"><path d="M408.9 301.3 C411.8 299.8 421.9 327.4 426.8 341.6 C431.6 355.8 435.0 371.5 438.0 386.4 C441.0 401.4 445.8 419.3 444.7 431.3 C443.6 443.2 434.3 459.7 431.3 458.2 C428.3 456.7 429.0 434.3 426.8 422.3 C424.5 410.4 420.8 398.4 417.8 386.4 C414.8 374.5 410.4 364.8 408.9 350.6 C407.4 336.4 405.9 302.8 408.9 301.3Z" fill="#e0c294" opacity=".8"/><path d="M388.7 368.5 C393.5 370.8 404.0 388.7 408.9 399.9 C413.7 411.1 418.6 432.0 417.8 435.8 C417.1 439.5 409.6 426.8 404.4 422.3 C399.1 417.8 390.6 414.8 386.4 408.9 C382.3 402.9 379.3 393.2 379.7 386.4 C380.1 379.7 383.8 366.3 388.7 368.5Z" fill="#a07a52" opacity=".7"/></g>
<g filter="url(#b4)"><path d="M323.7 399.9 C336.8 396.5 370.8 404.4 384.2 415.6 C397.7 426.8 406.2 448.1 404.4 467.1 C402.5 486.2 389.4 513.9 373.0 529.9 C356.6 545.9 324.4 557.5 305.8 563.1 C287.1 568.6 264.7 575.3 260.9 563.1 C257.2 550.8 275.9 510.8 283.3 489.6 C290.8 468.3 299.0 450.7 305.8 435.8 C312.5 420.8 310.6 403.3 323.7 399.9Z" fill="#5d5a55" opacity=".75"/></g>
<g filter="url(#b4)"><path d="M331.7 549.5 C357.5 537.8 417.1 539.9 449.2 547.0 C481.3 554.1 508.4 564.5 524.2 592.0 C540.0 619.5 539.2 675.8 544.2 712.0 C549.2 748.2 570.5 793.2 554.2 809.5 C538.0 825.8 466.7 825.8 446.7 809.5 C426.7 793.2 438.4 736.6 434.2 712.0 C430.0 687.4 435.9 674.5 421.7 662.0 C407.5 649.5 370.4 644.5 349.2 637.0 C327.9 629.5 297.1 631.6 294.2 617.0 C291.3 602.4 305.9 561.2 331.7 549.5Z" fill="#4a4944" opacity=".8"/><path d="M439.2 712.0 C455.4 689.9 525.0 660.8 544.2 677.0 C563.4 693.2 570.5 787.4 554.2 809.5 C538.0 831.6 465.9 825.8 446.7 809.5 C427.5 793.2 422.9 734.1 439.2 712.0Z" fill="#2b2c28" opacity=".8"/></g>
<g filter="url(#b2)"><polygon points="94.2,647.0 149.2,627.0 214.2,574.5 251.7,552.0 259.2,569.5 219.2,604.5 159.2,647.0 109.2,677.0" fill="#120b0e" opacity=".85"/><polygon points="109.2,712.0 174.2,677.0 204.2,672.0 219.2,697.0 174.2,727.0 116.7,762.0" fill="#160d11" opacity=".8"/><polygon points="214.2,627.0 294.2,569.5 331.7,549.5 389.2,552.0 299.2,627.0 249.2,623.2" fill="#1e1a18" opacity=".8"/></g>
<path d="M251.7 484.5 C256.9 477.4 277.5 479.1 282.9 484.5 C288.4 489.9 286.1 505.8 284.2 517.0 C282.3 528.2 279.2 541.2 271.7 552.0 C264.2 562.8 250.0 573.2 239.2 582.0 C228.4 590.8 217.5 602.0 206.7 604.5 C195.9 607.0 172.1 604.1 174.2 597.0 C176.3 589.9 206.3 573.7 219.2 562.0 C232.1 550.3 246.3 539.9 251.7 527.0 C257.1 514.1 246.5 491.6 251.7 484.5Z" fill="#e4c9b8"/>
<path d="M149.2 604.5 C153.9 599.9 165.0 595.1 174.2 594.5 C183.4 593.9 198.6 596.2 204.2 600.8 C209.8 605.3 210.4 614.3 207.9 622.0 C205.4 629.7 194.8 640.3 189.2 647.0 C183.6 653.7 180.9 659.0 174.2 662.0 C167.5 665.0 154.7 666.7 149.2 665.0 C143.7 663.3 140.7 656.7 141.2 652.0 C141.7 647.3 151.4 642.0 152.2 637.0 C153.0 632.0 146.7 627.4 146.2 622.0 C145.7 616.6 144.5 609.1 149.2 604.5Z" fill="#ecd3c4"/>
<path d="M321.7 497.0 C328.6 492.4 341.3 497.4 340.4 509.5 C339.6 521.6 324.0 551.6 316.7 569.5 C309.4 587.4 299.6 601.6 296.7 617.0 C293.8 632.4 300.4 651.6 299.2 662.0 C297.9 672.4 292.5 681.6 289.2 679.5 C285.9 677.4 282.9 650.8 279.2 649.5 C275.4 648.2 269.6 663.7 266.7 672.0 C263.8 680.3 264.6 694.7 261.7 699.5 C258.8 704.3 250.9 706.2 249.2 700.8 C247.5 695.3 250.0 679.3 251.7 667.0 C253.4 654.7 255.4 640.3 259.2 627.0 C262.9 613.7 267.5 602.0 274.2 587.0 C280.9 572.0 291.3 552.0 299.2 537.0 C307.1 522.0 314.8 501.6 321.7 497.0Z" fill="#e6cbbb"/></g><polygon points="-20.0,582.5 180.0,420.1 400.0,249.2 452.0,211.8 452.0,247.8 400.0,291.2 180.0,462.1 -20.0,610.5" fill="#fff" opacity="0.96" filter="url(#b2)"/>
<polygon points="-20.0,566.5 180.0,403.1 400.0,234.2 400.0,252.2 180.0,422.1 -20.0,584.5" fill="#fff" opacity="0.3" filter="url(#b4)"/>
<polygon points="90.0,650.2 262.0,528.2 262.0,531.8 90.0,653.8" fill="#fff" opacity="0.9" filter="url(#b1)"/>
<polygon points="110.0,710.7 300.0,594.7 300.0,597.3 110.0,713.3" fill="#fff" opacity="0.55" filter="url(#b1)"/>
<polygon points="112.0,748.3 179.0,701.4 379.0,572.9 585.0,442.6 585.0,462.6 379.0,595.9 179.0,723.4 116.0,759.8" fill="#fff" opacity="0.96" filter="url(#b2)"/>
<polygon points="56.0,788.2 114.0,749.0 114.0,761.0 56.0,798.2" fill="#fff" opacity="0.25" filter="url(#b4)"/>
<polygon points="190.0,812.0 228.0,812.0 279.0,771.5 379.0,708.5 430.0,676.4 430.0,652.4 379.0,686.5 279.0,753.5" fill="#fff" opacity="0.95" filter="url(#b2)"/>
<polygon points="430.0,652.4 585.0,552.6 585.0,574.6 430.0,676.4" fill="#fff" opacity="0.55" filter="url(#b2)"/>
<polygon points="379.0,616.0 585.0,497.0 585.0,527.0 379.0,646.0" fill="#fff" opacity="0.3" filter="url(#b4)"/>
<polygon points="300.0,696.0 585.0,526.0 585.0,534.0 300.0,704.0" fill="#fff" opacity="0.25" filter="url(#b2)"/>
<polygon points="364.5,802.5 585.0,655.9 585.0,674.9 364.5,821.5" fill="#fff" opacity="0.95" filter="url(#b2)"/>
<polygon points="395.0,514.0 585.0,357.0 585.0,393.0 395.0,544.0" fill="#fff" opacity="0.5" filter="url(#b4)"/>
<polygon points="379.0,538.0 451.0,495.0 451.0,511.0 379.0,554.0" fill="#fff" opacity="0.35" filter="url(#b2)"/>
<polygon points="-5.0,781.0 -5.0,815.0 20.0,815.0" fill="#fff" opacity="0.95" filter="url(#b1)"/>
<polygon points="380.0,389.4 585.0,231.9 585.0,240.9 380.0,397.4" fill="#fff" opacity="0.96" filter="url(#b1)"/>
<polygon points="430.0,336.5 585.0,220.5 585.0,223.5 430.0,339.5" fill="#fff" opacity="0.8" filter="url(#b1)"/>
<polygon points="400.0,356.0 585.0,216.0 585.0,236.0 400.0,380.0" fill="#fff" opacity="0.4" filter="url(#b2)"/>
<polygon points="283.0,561.2 585.0,345.2 585.0,348.8 283.0,564.8" fill="#fff" opacity="0.75" filter="url(#b1)"/>
<polygon points="440.0,807.0 585.0,711.0 585.0,721.0 440.0,817.0" fill="#fff" opacity="0.5" filter="url(#b2)"/>
<polygon points="389.0,315.0 585.0,194.0 585.0,210.0 389.0,331.0" fill="#fff" opacity="0.85" filter="url(#b2)"/>
<polygon points="474.0,317.0 585.0,252.0 585.0,264.0 474.0,329.0" fill="#fff" opacity="0.7" filter="url(#b2)"/>
<ellipse cx="82" cy="381" rx="1.1199999999999999" ry="1.8199999999999998" fill="#fff" opacity=".9" transform="rotate(-25 82 381)"/>
<ellipse cx="85" cy="386" rx="0.8800000000000001" ry="1.4300000000000002" fill="#fff" opacity=".9" transform="rotate(-25 85 386)"/>
<ellipse cx="161" cy="391" rx="1.04" ry="1.6900000000000002" fill="#fff" opacity=".9" transform="rotate(-25 161 391)"/>
<ellipse cx="166" cy="399" rx="1.2800000000000002" ry="2.08" fill="#fff" opacity=".9" transform="rotate(-25 166 399)"/>
<ellipse cx="169" cy="403" rx="0.8" ry="1.3" fill="#fff" opacity=".9" transform="rotate(-25 169 403)"/>
<ellipse cx="208" cy="456" rx="1.2000000000000002" ry="1.9500000000000002" fill="#fff" opacity=".9" transform="rotate(-25 208 456)"/>
<ellipse cx="212" cy="462" rx="0.96" ry="1.56" fill="#fff" opacity=".9" transform="rotate(-25 212 462)"/>
<ellipse cx="157" cy="486" rx="0.8800000000000001" ry="1.4300000000000002" fill="#fff" opacity=".9" transform="rotate(-25 157 486)"/>
<ellipse cx="160" cy="491" rx="0.7200000000000001" ry="1.1700000000000002" fill="#fff" opacity=".9" transform="rotate(-25 160 491)"/>
<ellipse cx="335" cy="451" rx="0.8" ry="1.3" fill="#fff" opacity=".9" transform="rotate(-25 335 451)"/>
<ellipse cx="136" cy="613" rx="0.96" ry="1.56" fill="#fff" opacity=".9" transform="rotate(-25 136 613)"/>
<ellipse cx="109" cy="692" rx="0.8" ry="1.3" fill="#fff" opacity=".9" transform="rotate(-25 109 692)"/>
<ellipse cx="484" cy="621" rx="0.96" ry="1.56" fill="#fff" opacity=".9" transform="rotate(-25 484 621)"/>
<ellipse cx="421" cy="711" rx="1.2800000000000002" ry="2.08" fill="#fff" opacity=".9" transform="rotate(-25 421 711)"/>
<ellipse cx="425" cy="718" rx="0.96" ry="1.56" fill="#fff" opacity=".9" transform="rotate(-25 425 718)"/>
<ellipse cx="367" cy="741" rx="0.8" ry="1.3" fill="#fff" opacity=".9" transform="rotate(-25 367 741)"/>
<ellipse cx="370" cy="747" rx="0.7200000000000001" ry="1.1700000000000002" fill="#fff" opacity=".9" transform="rotate(-25 370 747)"/>
<ellipse cx="452" cy="663" rx="0.8" ry="1.3" fill="#fff" opacity=".9" transform="rotate(-25 452 663)"/>
<ellipse cx="556" cy="427" rx="0.8" ry="1.3" fill="#fff" opacity=".9" transform="rotate(-25 556 427)"/></g></svg>
<svg class="abs" style="left:173px;top:230.5px;" width="20" height="20" viewBox="0 0 20 20"><g transform="translate(10 10) scale(.93) translate(-10 -10)"><path d="M10 3.6 V16.4 M3.6 10 H16.4" stroke="#d6d6d6" stroke-width="1.4" fill="none"/><path d="M10 1.8 L12.7 5.4 H7.3Z M10 18.2 L12.7 14.6 H7.3Z M1.8 10 L5.4 7.3 V12.7Z M18.2 10 L14.6 7.3 V12.7Z" fill="#d6d6d6"/></g></svg><svg class="abs" style="left:191.2px;top:245.7px;" width="4" height="4" viewBox="0 0 4 4"><path d="M3.4 0.6 L3.4 3.4 L0.6 3.4Z" fill="#c8c8c8"/></svg>
<svg class="abs" style="left:173px;top:255px;" width="20" height="20" viewBox="0 0 20 20"><g transform="translate(10 10) scale(.93) translate(-10 -10)"><rect x="2.6" y="3.6" width="14.8" height="12.8" fill="none" stroke="#d6d6d6" stroke-width="1.5" stroke-dasharray="3.2 2.6" stroke-dashoffset="1.6"/></g></svg><svg class="abs" style="left:191.2px;top:270.2px;" width="4" height="4" viewBox="0 0 4 4"><path d="M3.4 0.6 L3.4 3.4 L0.6 3.4Z" fill="#c8c8c8"/></svg>
<svg class="abs" style="left:173px;top:280.4px;" width="20" height="20" viewBox="0 0 20 20"><g transform="translate(10 10) scale(.93) translate(-10 -10)"><ellipse cx="10.2" cy="8.4" rx="7.3" ry="5" transform="rotate(-9 10.2 8.4)" fill="none" stroke="#d6d6d6" stroke-width="1.4"/><path d="M4.2 11.4 C5.8 11.2 7.6 12.4 6.4 13.8 C5.6 14.6 4 14 4.4 12.8 M6.2 14 C6.8 15.2 6.6 16.6 6 17.8" fill="none" stroke="#d6d6d6" stroke-width="1.2"/></g></svg><svg class="abs" style="left:191.2px;top:295.6px;" width="4" height="4" viewBox="0 0 4 4"><path d="M3.4 0.6 L3.4 3.4 L0.6 3.4Z" fill="#c8c8c8"/></svg>
<div class="abs" style="left:168px;top:304.1px;width:29.7px;height:22.7px;background:#383838;border-radius:1.5px"></div><svg class="abs" style="left:173px;top:305.5px;" width="20" height="20" viewBox="0 0 20 20"><g transform="translate(10 10) scale(.93) translate(-10 -10)"><path d="M3.2 16.8 L12.4 7.6" stroke="#d6d6d6" stroke-width="3.1" stroke-linecap="round" fill="none"/><path d="M11 7.4 L12.6 9" stroke="#383838" stroke-width="0.9" stroke-linecap="round"/><path d="M6.3 1.4 L7.1 3.8 L9.5 4.6 L7.1 5.4 L6.3 7.8 L5.5 5.4 L3.1 4.6 L5.5 3.8Z M15.8 1.2 L16.7 3.7 L19.2 4.6 L16.7 5.5 L15.8 8 L14.9 5.5 L12.4 4.6 L14.9 3.7Z M15.6 9.4 L16.2 10.9 L17.7 11.5 L16.2 12.1 L15.6 13.6 L15 12.1 L13.5 11.5 L15 10.9Z" fill="#d6d6d6"/></g></svg><svg class="abs" style="left:191.2px;top:320.7px;" width="4" height="4" viewBox="0 0 4 4"><path d="M3.4 0.6 L3.4 3.4 L0.6 3.4Z" fill="#c8c8c8"/></svg>
<svg class="abs" style="left:173px;top:330.8px;" width="20" height="20" viewBox="0 0 20 20"><g transform="translate(10 10) scale(.93) translate(-10 -10)"><path d="M5.6 1.6 V13.8 H18.2 M1.6 5.4 H14.4 V18" fill="none" stroke="#d6d6d6" stroke-width="1.6"/></g></svg><svg class="abs" style="left:191.2px;top:346.0px;" width="4" height="4" viewBox="0 0 4 4"><path d="M3.4 0.6 L3.4 3.4 L0.6 3.4Z" fill="#c8c8c8"/></svg>
<svg class="abs" style="left:173px;top:355.8px;" width="20" height="20" viewBox="0 0 20 20"><g transform="translate(10 10) scale(.93) translate(-10 -10)"><rect x="2.3" y="3.6" width="15.4" height="12.8" fill="none" stroke="#d6d6d6" stroke-width="1.4"/><path d="M2.3 3.6 L17.7 16.4 M17.7 3.6 L2.3 16.4" stroke="#d6d6d6" stroke-width="1.2"/></g></svg>
<svg class="abs" style="left:173px;top:381px;" width="20" height="20" viewBox="0 0 20 20"><g transform="translate(10 10) scale(.93) translate(-10 -10)"><path d="M4.2 16 L10.8 9.4" stroke="#d6d6d6" stroke-width="3.4" stroke-linecap="round"/><path d="M4.4 15.8 L10.6 9.6" stroke="#535353" stroke-width="1.2" stroke-linecap="round"/><path d="M8.6 6.2 L13.8 11.4" stroke="#d6d6d6" stroke-width="2.6" stroke-linecap="round"/><path d="M12 8 L15 5" stroke="#d6d6d6" stroke-width="4.2" stroke-linecap="round"/></g></svg><svg class="abs" style="left:191.2px;top:396.2px;" width="4" height="4" viewBox="0 0 4 4"><path d="M3.4 0.6 L3.4 3.4 L0.6 3.4Z" fill="#c8c8c8"/></svg>
<svg class="abs" style="left:173px;top:406px;" width="20" height="20" viewBox="0 0 20 20"><g transform="translate(10 10) scale(.93) translate(-10 -10)"><g transform="rotate(-40 10 10)"><rect x="1.6" y="6.6" width="16.8" height="7" rx="2.2" fill="#d6d6d6"/><path d="M7.4 6.6 V13.6 M9.1 6.6 V13.6 M10.9 6.6 V13.6 M12.6 6.6 V13.6" stroke="#535353" stroke-width="0.8"/></g><path d="M3 9.2 A4.2 4.2 0 0 1 9.2 3.4" fill="none" stroke="#8a8a8a" stroke-width="1" /></g></svg><svg class="abs" style="left:191.2px;top:421.2px;" width="4" height="4" viewBox="0 0 4 4"><path d="M3.4 0.6 L3.4 3.4 L0.6 3.4Z" fill="#c8c8c8"/></svg>
<svg class="abs" style="left:173px;top:431px;" width="20" height="20" viewBox="0 0 20 20"><g transform="translate(10 10) scale(.93) translate(-10 -10)"><path d="M16.8 2 L18 3 L11.6 11.8 L9.4 10 Z" fill="#d6d6d6"/><path d="M9 10.6 C6.2 10.4 5.6 13.2 3.2 17 C7.4 17.4 11.8 16 11.8 12.8 Z" fill="#d6d6d6"/></g></svg><svg class="abs" style="left:191.2px;top:446.2px;" width="4" height="4" viewBox="0 0 4 4"><path d="M3.4 0.6 L3.4 3.4 L0.6 3.4Z" fill="#c8c8c8"/></svg>
<svg class="abs" style="left:173px;top:456.6px;" width="20" height="20" viewBox="0 0 20 20"><g transform="translate(10 10) scale(.93) translate(-10 -10)"><path d="M10 2 a3.5 3.5 0 0 1 2.4 6 c-.9 1-.7 2.4 .2 3.3 H16.6 V14.6 H3.4 V11.3 H7.4 c.9-.9 1.1-2.3 .2-3.3 A3.5 3.5 0 0 1 10 2Z" fill="#d6d6d6"/><rect x="3.4" y="15.6" width="13.2" height="1.5" fill="#d6d6d6"/></g></svg><svg class="abs" style="left:191.2px;top:471.8px;" width="4" height="4" viewBox="0 0 4 4"><path d="M3.4 0.6 L3.4 3.4 L0.6 3.4Z" fill="#c8c8c8"/></svg>
<svg class="abs" style="left:173px;top:482px;" width="20" height="20" viewBox="0 0 20 20"><g transform="translate(10 10) scale(.93) translate(-10 -10)"><g transform="translate(1.2 0)"><path d="M16.8 2 L18 3 L11.6 11.8 L9.4 10 Z" fill="#d6d6d6"/><path d="M9 10.6 C6.2 10.4 5.6 13.2 3.2 17 C7.4 17.4 11.8 16 11.8 12.8 Z" fill="#d6d6d6"/></g><path d="M1.2 6.6 L5.6 4 V5.8 H10.6 V7.2 H5.6 V9.2Z" fill="#d6d6d6"/><path d="M14.6 9 L13.6 12.6 M16.2 10.4 L15.2 13.6" stroke="#d6d6d6" stroke-width="0.9" stroke-dasharray="1 1"/></g></svg><svg class="abs" style="left:191.2px;top:497.2px;" width="4" height="4" viewBox="0 0 4 4"><path d="M3.4 0.6 L3.4 3.4 L0.6 3.4Z" fill="#c8c8c8"/></svg>
<svg class="abs" style="left:173px;top:507px;" width="20" height="20" viewBox="0 0 20 20"><g transform="translate(10 10) scale(.93) translate(-10 -10)"><path d="M11.6 2.4 L17.6 7.8 L12.4 13.6 L6.4 8.2Z" fill="#d6d6d6"/><path d="M6.4 8.2 L2.6 12.2 L5.8 16 H10.2 L12.4 13.6" fill="none" stroke="#d6d6d6" stroke-width="1.3"/><path d="M5.8 16 H17.4" stroke="#d6d6d6" stroke-width="1.3"/></g></svg><svg class="abs" style="left:191.2px;top:522.2px;" width="4" height="4" viewBox="0 0 4 4"><path d="M3.4 0.6 L3.4 3.4 L0.6 3.4Z" fill="#c8c8c8"/></svg>
<svg class="abs" style="left:173px;top:532.2px;" width="20" height="20" viewBox="0 0 20 20"><g transform="translate(10 10) scale(.93) translate(-10 -10)"><path d="M8.6 4.4 L15 10.8 L8.6 17.2 L2.2 10.8Z" fill="none" stroke="#d6d6d6" stroke-width="1.5"/><circle cx="5.8" cy="2.8" r="1.5" fill="none" stroke="#d6d6d6" stroke-width="1.1"/><path d="M6.6 3.8 L9.4 7.6" stroke="#d6d6d6" stroke-width="1.2"/><circle cx="9.8" cy="8" r="1.1" fill="#d6d6d6"/><path d="M16.6 10 C16.6 10 14.4 12.6 14.4 13.8 a2.2 2.2 0 0 0 4.4 0 C18.8 12.6 16.6 10 16.6 10Z" fill="#d6d6d6"/></g></svg><svg class="abs" style="left:191.2px;top:547.4px;" width="4" height="4" viewBox="0 0 4 4"><path d="M3.4 0.6 L3.4 3.4 L0.6 3.4Z" fill="#c8c8c8"/></svg>
<svg class="abs" style="left:173px;top:558px;" width="20" height="20" viewBox="0 0 20 20"><g transform="translate(10 10) scale(.93) translate(-10 -10)"><path d="M10 2.2 C10 2.2 4.8 8.8 4.8 12.2 a5.2 5.2 0 0 0 10.4 0 C15.2 8.8 10 2.2 10 2.2Z" fill="#d6d6d6"/></g></svg><svg class="abs" style="left:191.2px;top:573.2px;" width="4" height="4" viewBox="0 0 4 4"><path d="M3.4 0.6 L3.4 3.4 L0.6 3.4Z" fill="#c8c8c8"/></svg>
<svg class="abs" style="left:173px;top:583px;" width="20" height="20" viewBox="0 0 20 20"><g transform="translate(10 10) scale(.93) translate(-10 -10)"><path fill-rule="evenodd" d="M2.8 9.6 C2.8 6 6 4 9.4 4 C12.8 4 14.6 6 17.6 7.6 L17.6 15.8 L14.4 14.6 C12.6 15.8 9.4 15.9 7.4 15.2 C4.4 14.4 2.8 12.6 2.8 9.6Z M7 7.6 a2.3 2.3 0 1 0 0.01 0Z" fill="#d6d6d6"/></g></svg><svg class="abs" style="left:191.2px;top:598.2px;" width="4" height="4" viewBox="0 0 4 4"><path d="M3.4 0.6 L3.4 3.4 L0.6 3.4Z" fill="#c8c8c8"/></svg>
<svg class="abs" style="left:173px;top:608px;" width="20" height="20" viewBox="0 0 20 20"><g transform="translate(10 10) scale(.93) translate(-10 -10)"><path d="M3.4 17.2 L5.4 8.8 L11 5 L15.4 9.4 L11.6 15.2 Z" fill="none" stroke="#d6d6d6" stroke-width="1.4" stroke-linejoin="round"/><path d="M3.6 17 L9.4 11.2" stroke="#d6d6d6" stroke-width="1.1"/><circle cx="9.8" cy="10.8" r="1.3" fill="#d6d6d6"/><path d="M12.6 2.6 L17.8 7.8 L16 9.6 L10.8 4.4Z" fill="#d6d6d6"/></g></svg><svg class="abs" style="left:191.2px;top:623.2px;" width="4" height="4" viewBox="0 0 4 4"><path d="M3.4 0.6 L3.4 3.4 L0.6 3.4Z" fill="#c8c8c8"/></svg>
<svg class="abs" style="left:173px;top:633.2px;" width="20" height="20" viewBox="0 0 20 20"><g transform="translate(10 10) scale(.93) translate(-10 -10)"><path d="M3.5 3.4 H16.5 V7 H15.5 C15.3 5.6 14.7 4.9 13.4 4.9 H11 V14.5 C11 15.5 11.6 15.8 12.9 15.8 V16.7 H7.1 V15.8 C8.4 15.8 9 15.5 9 14.5 V4.9 H6.6 C5.3 4.9 4.7 5.6 4.5 7 H3.5 Z" fill="#d6d6d6"/></g></svg><svg class="abs" style="left:191.2px;top:648.4px;" width="4" height="4" viewBox="0 0 4 4"><path d="M3.4 0.6 L3.4 3.4 L0.6 3.4Z" fill="#c8c8c8"/></svg>
<svg class="abs" style="left:173px;top:658.2px;" width="20" height="20" viewBox="0 0 20 20"><g transform="translate(10 10) scale(.93) translate(-10 -10)"><path d="M5.6 2.6 V15.2 L8.6 12.4 L10.9 17.4 L12.9 16.5 L10.6 11.6 H14.8 Z" fill="#101010" stroke="#d6d6d6" stroke-width="1.2" stroke-linejoin="round"/></g></svg><svg class="abs" style="left:191.2px;top:673.4px;" width="4" height="4" viewBox="0 0 4 4"><path d="M3.4 0.6 L3.4 3.4 L0.6 3.4Z" fill="#c8c8c8"/></svg>
<svg class="abs" style="left:173px;top:683px;" width="20" height="20" viewBox="0 0 20 20"><g transform="translate(10 10) scale(.93) translate(-10 -10)"><rect x="2.8" y="4" width="14.6" height="12" fill="#6b6b6b" stroke="#d6d6d6" stroke-width="1.3"/></g></svg><svg class="abs" style="left:191.2px;top:698.2px;" width="4" height="4" viewBox="0 0 4 4"><path d="M3.4 0.6 L3.4 3.4 L0.6 3.4Z" fill="#c8c8c8"/></svg>
<svg class="abs" style="left:173px;top:708.4px;" width="20" height="20" viewBox="0 0 20 20"><g transform="translate(10 10) scale(.93) translate(-10 -10)"><path d="M6.3 11 V5.4 a1.05 1.05 0 0 1 2.1 0 V9.2 V3.6 a1.05 1.05 0 0 1 2.1 0 V9.2 V4 a1.05 1.05 0 0 1 2.1 0 V9.6 V6 a1.05 1.05 0 0 1 2.1 0 V12.6 C14.7 15.6 13 17.6 10.4 17.6 C8 17.6 7 16.6 5.8 14.9 L2.6 10.4 C2.1 9.6 3.2 8.7 3.9 9.4 L6.3 12Z" fill="#d6d6d6"/></g></svg><svg class="abs" style="left:191.2px;top:723.6px;" width="4" height="4" viewBox="0 0 4 4"><path d="M3.4 0.6 L3.4 3.4 L0.6 3.4Z" fill="#c8c8c8"/></svg>
<svg class="abs" style="left:173px;top:733.6px;" width="20" height="20" viewBox="0 0 20 20"><g transform="translate(10 10) scale(.93) translate(-10 -10)"><circle cx="8" cy="8.4" r="5.3" fill="none" stroke="#d6d6d6" stroke-width="1.4"/><path d="M12 12.4 L17 17.4" stroke="#d6d6d6" stroke-width="1.9" stroke-linecap="round"/><path d="M5.2 7.4 A3 3 0 0 1 8 5.2" fill="none" stroke="#9a9a9a" stroke-width="0.9"/></g></svg>
<svg class="abs" style="left:173px;top:759.3px;" width="20" height="20" viewBox="0 0 20 20"><g transform="translate(10 10) scale(.93) translate(-10 -10)"><rect x="3.2" y="8.9" width="2.4" height="2.4" rx=".6" fill="#d6d6d6"/><rect x="8.8" y="8.9" width="2.4" height="2.4" rx=".6" fill="#d6d6d6"/><rect x="14.5" y="8.9" width="2.4" height="2.4" rx=".6" fill="#d6d6d6"/></g></svg><svg class="abs" style="left:191.2px;top:774.5px;" width="4" height="4" viewBox="0 0 4 4"><path d="M3.4 0.6 L3.4 3.4 L0.6 3.4Z" fill="#c8c8c8"/></svg>
<div class="abs" style="left:169.2px;top:787.6px;width:6.2px;height:6.2px;background:#111;border:1px solid #d8d8d8"></div>
<div class="abs" style="left:172.6px;top:791px;width:5.8px;height:5.8px;background:#e4e4e4;"></div>
<div class="abs" style="left:169.2px;top:787.6px;width:6.2px;height:6.2px;background:#111;border:1px solid #d8d8d8"></div>
<svg class="abs" style="left:185px;top:786.6px;" width="11" height="11" viewBox="0 0 11 11"><path d="M3.2 2.8 H8 V8.2" fill="none" stroke="#d6d6d6" stroke-width="1.3"/><path d="M0.6 2.8 L3.6 0.6 V5Z M8 10.6 L5.8 7.6 H10.2Z" fill="#d6d6d6"/></svg>
<div class="abs" style="left:178.4px;top:812.2px;width:18px;height:18px;background:#ffffff;box-shadow:0 0 0 1px #3c3c3c"></div>
<div class="abs" style="left:168.8px;top:803px;width:17.6px;height:17.6px;background:#0f060a;border:1.2px solid #e8e8e8;box-shadow:0 0 0 1px #3c3c3c"></div>
<svg class="abs" style="left:174.4px;top:841.8px;" width="17" height="13.2" viewBox="0 0 17 13.2"><rect x=".7" y=".7" width="15.6" height="11.8" fill="#5e5e5e" stroke="#d6d6d6" stroke-width="1.2"/><circle cx="8.5" cy="6.6" r="3.3" fill="none" stroke="#8c8c8c" stroke-width="1.1" stroke-dasharray="4 1.2"/></svg>
<svg class="abs" style="left:174.4px;top:866.6px;" width="17" height="13.4" viewBox="0 0 17 13.4"><rect x=".7" y="3.6" width="10.6" height="9" fill="#535353" stroke="#d6d6d6" stroke-width="1.2"/><rect x="5.6" y=".7" width="10.7" height="8.6" fill="#666" stroke="#d6d6d6" stroke-width="1.2"/></svg><svg class="abs" style="left:191.6px;top:876px;" width="4" height="4" viewBox="0 0 4 4"><path d="M3.4 0.6 L3.4 3.4 L0.6 3.4Z" fill="#c8c8c8"/></svg>
<div class="abs" style="left:1840px;top:200px;width:316px;height:11.5px;background:#414141;"></div>
<div class="abs" style="left:1840px;top:211.5px;width:37px;height:1px;background:#383838;"></div>
<div class="abs" style="left:1880px;top:211.5px;width:276px;height:1px;background:#383838;"></div>
<svg class="abs" style="left:1864.4px;top:203px;" width="8" height="6" viewBox="0 0 8 6"><path d="M3 1 L1 3 L3 5 M6.2 1 L4.2 3 L6.2 5" fill="none" stroke="#c4c4c4" stroke-width="1"/></svg>
<svg class="abs" style="left:2141.4px;top:203px;" width="8" height="6" viewBox="0 0 8 6"><path d="M1 1 L3 3 L1 5 M4.2 1 L6.2 3 L4.2 5" fill="none" stroke="#c4c4c4" stroke-width="1"/></svg>
<div class="abs" style="left:1840px;top:278px;width:37px;height:1.5px;background:#3e3e3e;"></div>
<div class="abs" style="left:1840px;top:345px;width:37px;height:1.5px;background:#3e3e3e;"></div>
<div class="abs" style="left:1840px;top:384.5px;width:37px;height:1.5px;background:#3e3e3e;"></div>
<div class="abs" style="left:1840px;top:424.5px;width:37px;height:1.5px;background:#3e3e3e;"></div>
<div class="abs" style="left:1849px;top:216px;width:18px;height:1.4px;background:#484848;"></div>
<div class="abs" style="left:1849px;top:282.5px;width:18px;height:1.4px;background:#484848;"></div>
<div class="abs" style="left:1849px;top:349.5px;width:18px;height:1.4px;background:#484848;"></div>
<div class="abs" style="left:1849px;top:389.8px;width:18px;height:1.4px;background:#484848;"></div>
<svg class="abs" style="left:1850px;top:224px;" width="18" height="19" viewBox="0 0 18 19"><rect x="1.6" y="1" width="5" height="4.6" fill="none" stroke="#d6d6d6" stroke-width="1.2"/><rect x="1.6" y="6.8" width="5" height="4.6" fill="none" stroke="#d6d6d6" stroke-width="1.2"/><rect x="1" y="12.4" width="6.2" height="5.4" fill="#d6d6d6"/><path d="M0.4 11.6 H8" stroke="#d6d6d6" stroke-width=".8"/><path d="M10 14.6 C14.6 12.6 15.6 7.6 12.6 4.4" fill="none" stroke="#d6d6d6" stroke-width="1.9"/><path d="M9.4 5.6 L14.6 2.2 L14 7.6Z" fill="#d6d6d6"/></svg>
<svg class="abs" style="left:1851px;top:253px;" width="17" height="15" viewBox="0 0 17 15"><path d="M2 .8 H14.6 a1.2 1.2 0 0 1 1.2 1.2 V9 a1.2 1.2 0 0 1 -1.2 1.2 H7.2 L3.8 14.2 L4 10.2 H2 A1.2 1.2 0 0 1 .8 9 V2 A1.2 1.2 0 0 1 2 .8Z" fill="#d6d6d6"/></svg>
<svg class="abs" style="left:1850px;top:291px;" width="20" height="19" viewBox="0 0 20 19"><path d="M17.6 1.4 L19 2.6 L12.2 11 L10 9.2Z" fill="#d6d6d6"/><path d="M9.6 9.8 C7 9.6 6.4 12.4 4.2 16 C8.2 16.4 12.4 15 12.4 12Z" fill="#d6d6d6"/><g fill="#d6d6d6"><rect x="0.6" y="1" width="1.8" height="1.6"/><rect x="3.6" y="1" width="3.4" height="1.6"/><rect x="0.6" y="4" width="1.8" height="1.6"/><rect x="3.6" y="4" width="3.4" height="1.6"/><rect x="0.6" y="7" width="1.8" height="1.6"/><rect x="3.6" y="7" width="3.4" height="1.6"/></g></svg>
<svg class="abs" style="left:1849px;top:320px;" width="20" height="16" viewBox="0 0 20 16"><path d="M0.6 3.4 C2 1.2 5.4 1 7.2 2.6 H18 V4.4 H7.2 C5.4 6 2 5.6 0.6 3.4Z" fill="#d6d6d6"/><path d="M2 10.6 H12.4 C13.6 8.4 16.6 7.6 18.6 7.2 V15.6 C16.6 15.2 13.6 14.6 12.4 12.4 H2Z" fill="#d6d6d6"/></svg>
<div class="t" style="left:1852.10px;top:356.38px;font-size:22.00px;line-height:22.00px;color:#e4e4e4;transform-origin:0 0;transform:scaleX(0.9441);font-weight:bold;-webkit-text-stroke:0.12px #e4e4e4;font-family:'Liberation Serif',serif;font-style:italic;">A</div>
<div class="abs" style="left:1851.5px;top:361px;width:4.2px;height:1.3px;background:#d6d6d6;"></div>
<div class="t" style="left:1850.60px;top:394.94px;font-size:18.50px;line-height:18.50px;color:#f4f4f4;transform-origin:0 0;transform:scaleX(0.8495);-webkit-text-stroke:0.3px #f4f4f4;font-style:italic;">T</div>
<div class="t" style="left:1857.80px;top:399.34px;font-size:18.50px;line-height:18.50px;color:#f4f4f4;transform-origin:0 0;transform:scaleX(0.8590);-webkit-text-stroke:0.3px #f4f4f4;font-style:italic;">K</div>
<div class="abs" style="left:1849.2px;top:415.2px;width:6.4px;height:3.2px;background:#000;"></div>
<div class="abs" style="left:1855.6px;top:415.2px;width:6.4px;height:3.2px;background:#8c8c8c;"></div>
<div class="abs" style="left:1862px;top:415.2px;width:6.6px;height:3.2px;background:#fff;"></div>
<div class="abs" style="left:1880px;top:212.5px;width:276px;height:26px;background:#424242;"></div><div class="abs" style="left:1880px;top:212.5px;width:44.299999999999955px;height:27px;background:#535353;"></div><div class="t" style="left:1888.70px;top:221.14px;font-size:9.75px;line-height:9.75px;color:#f2f2f2;transform-origin:0 0;transform:scaleX(1.0447);font-weight:bold;-webkit-text-stroke:0.12px #f2f2f2;">Color</div><div class="abs" style="left:1987.4px;top:212.5px;width:1px;height:26px;background:#3a3a3a;"></div><div class="t" style="left:1933.20px;top:221.14px;font-size:9.75px;line-height:9.75px;color:#b4b4b4;transform-origin:0 0;transform:scaleX(1.0269);font-weight:bold;-webkit-text-stroke:0.12px #b4b4b4;">Swatches</div><div class="abs" style="left:2054.1px;top:212.5px;width:1px;height:26px;background:#3a3a3a;"></div><div class="t" style="left:1998.20px;top:221.14px;font-size:9.75px;line-height:9.75px;color:#b4b4b4;transform-origin:0 0;transform:scaleX(1.0500);font-weight:bold;-webkit-text-stroke:0.12px #b4b4b4;">Gradients</div><div class="abs" style="left:2114.6px;top:212.5px;width:1px;height:26px;background:#3a3a3a;"></div><div class="t" style="left:2065.30px;top:221.14px;font-size:9.75px;line-height:9.75px;color:#b4b4b4;transform-origin:0 0;transform:scaleX(1.0404);font-weight:bold;-webkit-text-stroke:0.12px #b4b4b4;">Patterns</div>
<svg class="abs" style="left:2140px;top:221px;" width="11" height="8" viewBox="0 0 11 8"><path d="M0 .5 H10 M0 2.8 H10 M0 5.1 H10 M0 7.4 H10" stroke="#c2c2c2" stroke-width=".85"/></svg>
<div class="abs" style="left:1898.8px;top:258.8px;width:18.8px;height:18.4px;background:#ffffff;box-shadow:0 0 0 1px #3f3f3f"></div>
<div class="abs" style="left:1888.6px;top:248.6px;width:19.4px;height:19.2px;background:#12060c;border:1.3px solid #e6e6e6;box-shadow:0 0 0 1px #3f3f3f"></div>
<div class="abs" style="left:1923.6px;top:245.8px;width:181.5px;height:337.2px;background:linear-gradient(to bottom,rgba(0,0,0,0),#000),linear-gradient(to right,#fff 0%,#f5b6d8 25%,#ee76b6 50%,#eb4f9f 75%,#e9338e 100%)"></div>
<svg class="abs" style="left:2054.5px;top:553.2px;" width="14" height="14" viewBox="0 0 14 14"><circle cx="7" cy="7" r="5.2" fill="none" stroke="#f0f0f0" stroke-width="1.3"/></svg>
<div class="abs" style="left:2121px;top:245.8px;width:18.8px;height:337.2px;background:linear-gradient(to bottom,#e83a2c 0%,#e93232 5%,#ea3290 10.5%,#ec36f0 16.7%,#8a22f8 25%,#1a00f8 33.3%,#2a6cfa 42%,#66f6fc 50%,#5cf8a0 58%,#66f04a 66.7%,#b6f44a 75%,#f6f64e 83.3%,#f49a36 91%,#e83a2c 100%)"></div>
<svg class="abs" style="left:2111.4px;top:263.2px;" width="9" height="9" viewBox="0 0 9 9"><path d="M1.4 1 L6.6 3.6 Q7.6 4.4 6.6 5.2 L1.4 7.8 Q0.8 8 0.8 7.2 V1.6 Q0.8 0.8 1.4 1Z" fill="#ececec"/></svg>
<div class="abs" style="left:1880px;top:600px;width:276px;height:3.4px;background:#3e3e3e;"></div>
<div class="abs" style="left:1880px;top:603.4px;width:276px;height:26.4px;background:#424242;"></div><div class="abs" style="left:1880px;top:603.4px;width:68.59999999999991px;height:27.4px;background:#535353;"></div><div class="t" style="left:1888.90px;top:612.24px;font-size:9.75px;line-height:9.75px;color:#f2f2f2;transform-origin:0 0;transform:scaleX(1.0469);font-weight:bold;-webkit-text-stroke:0.12px #f2f2f2;">Properties</div><div class="abs" style="left:2028.2px;top:603.4px;width:1px;height:26.4px;background:#3a3a3a;"></div><div class="t" style="left:1957.50px;top:612.24px;font-size:9.75px;line-height:9.75px;color:#b4b4b4;transform-origin:0 0;transform:scaleX(1.0616);font-weight:bold;-webkit-text-stroke:0.12px #b4b4b4;">Adjustments</div><div class="abs" style="left:2090.3px;top:603.4px;width:1px;height:26.4px;background:#3a3a3a;"></div><div class="t" style="left:2039.00px;top:612.24px;font-size:9.75px;line-height:9.75px;color:#b4b4b4;transform-origin:0 0;transform:scaleX(1.0608);font-weight:bold;-webkit-text-stroke:0.12px #b4b4b4;">Libraries</div>
<svg class="abs" style="left:2140px;top:612.8px;" width="11" height="8" viewBox="0 0 11 8"><path d="M0 .5 H10 M0 2.8 H10 M0 5.1 H10 M0 7.4 H10" stroke="#c2c2c2" stroke-width=".85"/></svg>
<div class="abs" style="left:1880px;top:662px;width:276px;height:1.2px;background:#474747;"></div>
<div class="abs" style="left:2141px;top:663.2px;width:15px;height:426px;background:#4b4b4b;"></div>
<div class="abs" style="left:1890.8px;top:636px;width:21.1px;height:20.9px;background:#3a3a3a;border-radius:1.5px"></div>
<svg class="abs" style="left:1894px;top:640px;" width="15" height="13" viewBox="0 0 15 13"><rect x=".7" y=".7" width="13.4" height="11.2" fill="none" stroke="#d6d6d6" stroke-width="1.3"/><path d="M1.6 11 L4.6 6.4 L6.2 8.6 L7.6 5 L9.2 8.2 L10.4 7 L12.8 11Z" fill="#d6d6d6"/><rect x="10.4" y="2.6" width="1.8" height="1.8" fill="#d6d6d6"/></svg>
<div class="t" style="left:1916.90px;top:643.65px;font-size:9.15px;line-height:9.15px;color:#cfcfcf;transform-origin:0 0;transform:scaleX(1.1044);-webkit-text-stroke:0.22px #cfcfcf;">Pixel Layer</div>
<svg class="abs" style="left:1886.3px;top:676.6px;" width="9" height="6" viewBox="0 0 9 6"><path d="M.8 .8 L4.4 4.6 L8 .8" fill="none" stroke="#c4c4c4" stroke-width="1.2"/></svg>
<div class="t" style="left:1900.60px;top:673.98px;font-size:9.24px;line-height:9.24px;color:#ececec;transform-origin:0 0;transform:scaleX(1.1220);font-weight:bold;-webkit-text-stroke:0.12px #ececec;">Transform</div>
<div class="abs" style="left:1888.9px;top:700px;width:23px;height:24px;background:#3a3a3a;border-radius:1.5px"></div>
<svg class="abs" style="left:1896px;top:705px;" width="9" height="14" viewBox="0 0 9 14"><rect x="1.6" y=".8" width="5.4" height="6.4" rx="2.6" fill="none" stroke="#d6d6d6" stroke-width="1.3"/><rect x="1.6" y="6.6" width="5.4" height="6.4" rx="2.6" fill="none" stroke="#d6d6d6" stroke-width="1.3"/><path d="M4.3 4.6 V9.4" stroke="#d6d6d6" stroke-width="1.3"/></svg>
<div class="t" style="left:1920.90px;top:696.40px;font-size:8.98px;line-height:8.98px;color:#c6c6c6;transform-origin:0 0;transform:scaleX(1.0151);-webkit-text-stroke:0.22px #c6c6c6;">W</div>
<div class="abs" style="left:1935.9px;top:694.3px;width:56.4px;height:12.8px;background:#3f3f3f;border:1px solid #4a4a4a;border-radius:1.5px;box-shadow:0 0 0 .5px #474747"></div>
<div class="t" style="left:1938.50px;top:696.40px;font-size:8.98px;line-height:8.98px;color:#e8e8e8;transform-origin:0 0;transform:scaleX(1.1176);-webkit-text-stroke:0.22px #e8e8e8;">1786 px</div>
<div class="t" style="left:2002.10px;top:696.40px;font-size:8.98px;line-height:8.98px;color:#c6c6c6;transform-origin:0 0;transform:scaleX(1.1193);-webkit-text-stroke:0.22px #c6c6c6;">X</div>
<div class="abs" style="left:2013.8px;top:694.3px;width:57px;height:12.8px;background:#3f3f3f;border:1px solid #4a4a4a;border-radius:1.5px;box-shadow:0 0 0 .5px #474747"></div>
<div class="t" style="left:2016.00px;top:696.40px;font-size:8.98px;line-height:8.98px;color:#e8e8e8;transform-origin:0 0;transform:scaleX(1.1611);-webkit-text-stroke:0.22px #e8e8e8;">0 px</div>
<div class="t" style="left:1923.20px;top:719.40px;font-size:8.98px;line-height:8.98px;color:#c6c6c6;transform-origin:0 0;transform:scaleX(1.1193);-webkit-text-stroke:0.22px #c6c6c6;">H</div>
<div class="abs" style="left:1935.9px;top:717.7px;width:56.4px;height:12.8px;background:#3f3f3f;border:1px solid #4a4a4a;border-radius:1.5px;box-shadow:0 0 0 .5px #474747"></div>
<div class="t" style="left:1938.50px;top:719.40px;font-size:8.98px;line-height:8.98px;color:#e8e8e8;transform-origin:0 0;transform:scaleX(1.1708);-webkit-text-stroke:0.22px #e8e8e8;">2500 px</div>
<div class="t" style="left:2002.30px;top:719.40px;font-size:8.98px;line-height:8.98px;color:#c6c6c6;transform-origin:0 0;transform:scaleX(1.1193);-webkit-text-stroke:0.22px #c6c6c6;">Y</div>
<div class="abs" style="left:2013.8px;top:717.7px;width:57px;height:12.8px;background:#3f3f3f;border:1px solid #4a4a4a;border-radius:1.5px;box-shadow:0 0 0 .5px #474747"></div>
<div class="t" style="left:2016.00px;top:719.40px;font-size:8.98px;line-height:8.98px;color:#e8e8e8;transform-origin:0 0;transform:scaleX(1.1611);-webkit-text-stroke:0.22px #e8e8e8;">0 px</div>
<svg class="abs" style="left:1916.4px;top:746.4px;" width="13" height="10" viewBox="0 0 13 10"><path d="M.8 9.2 H12.2 M.8 9.2 L9.6 1" fill="none" stroke="#d6d6d6" stroke-width="1.2"/><path d="M6.8 9 A6 6 0 0 0 5.4 5" fill="none" stroke="#d6d6d6" stroke-width="1.1"/></svg>
<div class="abs" style="left:1935px;top:744.3px;width:42px;height:13.6px;background:#3f3f3f;border:1px solid #4a4a4a;border-radius:1.5px;box-shadow:0 0 0 .5px #474747"></div>
<div class="abs" style="left:1979px;top:744.3px;width:12.2px;height:13.6px;background:#3f3f3f;border:1px solid #4a4a4a;border-radius:1.5px;box-shadow:0 0 0 .5px #474747"></div>
<div class="t" style="left:1938.50px;top:747.10px;font-size:8.98px;line-height:8.98px;color:#e8e8e8;transform-origin:0 0;transform:scaleX(1.1491);-webkit-text-stroke:0.22px #e8e8e8;">0,00°</div>
<svg class="abs" style="left:1981.2px;top:749px;" width="8" height="5" viewBox="0 0 8 5"><path d="M.8 .8 L3.8 3.8 L6.8 .8" fill="none" stroke="#d0d0d0" stroke-width="1.2"/></svg>
<svg class="abs" style="left:2018px;top:744.6px;" width="16" height="13" viewBox="0 0 16 13"><path d="M8 0 V13" stroke="#9a9a9a" stroke-width="1"/><path d="M.8 2.6 L5 6.5 L.8 10.4Z" fill="none" stroke="#d6d6d6" stroke-width="1.1"/><path d="M15.4 2.2 L10.8 6.5 L15.4 10.8Z" fill="#d6d6d6"/></svg>
<svg class="abs" style="left:2052.4px;top:744.2px;" width="13" height="15" viewBox="0 0 13 15"><path d="M0 7.4 H13" stroke="#9a9a9a" stroke-width="1"/><path d="M2.6 .8 L6.5 5 L10.4 .8Z" fill="none" stroke="#d6d6d6" stroke-width="1.1"/><path d="M2.2 14.2 L6.5 9.8 L10.8 14.2Z" fill="#d6d6d6"/></svg>
<div class="abs" style="left:1880px;top:773.7px;width:261px;height:1px;background:#454545;"></div>
<svg class="abs" style="left:1886.3px;top:788px;" width="9" height="6" viewBox="0 0 9 6"><path d="M.8 .8 L4.4 4.6 L8 .8" fill="none" stroke="#c4c4c4" stroke-width="1.2"/></svg>
<div class="t" style="left:1900.60px;top:785.28px;font-size:9.24px;line-height:9.24px;color:#ececec;transform-origin:0 0;transform:scaleX(1.1198);font-weight:bold;-webkit-text-stroke:0.12px #ececec;">Align and Distribute</div>
<div class="t" style="left:1887.90px;top:805.90px;font-size:8.98px;line-height:8.98px;color:#c8c8c8;transform-origin:0 0;transform:scaleX(1.1579);-webkit-text-stroke:0.22px #c8c8c8;">Align:</div>
<svg class="abs" style="left:1893px;top:829.4px;" width="14" height="15.4" viewBox="0 0 14 15.4"><path d="M.8 0 V15.4" stroke="#9c9c9c" stroke-width="1"/><rect x="2.6" y="3" width="6.4" height="3.4" fill="#9c9c9c"/><rect x="2.6" y="8.6" width="10.6" height="3.4" fill="#9c9c9c"/></svg>
<svg class="abs" style="left:1921.4px;top:829.4px;" width="14" height="15.4" viewBox="0 0 14 15.4"><path d="M6.4 0 V15.4" stroke="#9c9c9c" stroke-width="1"/><rect x="3.2" y="3" width="6.4" height="3.4" fill="#9c9c9c"/><rect x="1" y="8.6" width="10.8" height="3.4" fill="#9c9c9c"/></svg>
<svg class="abs" style="left:1949.4px;top:829.4px;" width="14" height="15.4" viewBox="0 0 14 15.4"><path d="M12.6 0 V15.4" stroke="#9c9c9c" stroke-width="1"/><rect x="4.6" y="3" width="6.4" height="3.4" fill="#9c9c9c"/><rect x=".4" y="8.6" width="10.6" height="3.4" fill="#9c9c9c"/></svg>
<svg class="abs" style="left:1994.2px;top:829.4px;" width="14" height="15.4" viewBox="0 0 14 15.4"><path d="M0 1.4 H13.6" stroke="#9c9c9c" stroke-width="1.2"/><rect x="2.4" y="3.2" width="3.6" height="10.6" fill="#9c9c9c"/><rect x="7.8" y="3.2" width="3.6" height="6.2" fill="#9c9c9c"/></svg>
<svg class="abs" style="left:2022.4px;top:829.4px;" width="14" height="15.4" viewBox="0 0 14 15.4"><path d="M0 7.4 H13" stroke="#9c9c9c" stroke-width="1.2"/><rect x="2.4" y="2" width="3.6" height="10.8" fill="#9c9c9c"/><rect x="7.6" y="4.2" width="3.6" height="6.4" fill="#9c9c9c"/></svg>
<svg class="abs" style="left:2050px;top:829.4px;" width="14" height="15.4" viewBox="0 0 14 15.4"><path d="M0 14.4 H13.6" stroke="#9c9c9c" stroke-width="1.2"/><rect x="2.4" y="1.6" width="3.6" height="11" fill="#9c9c9c"/><rect x="7.8" y="6.2" width="3.6" height="6.4" fill="#9c9c9c"/></svg>
<div class="abs" style="left:2055.0px;top:866.4px;width:2.2px;height:2.2px;background:#e0e0e0;border-radius:1px"></div>
<div class="abs" style="left:2059.9px;top:866.4px;width:2.2px;height:2.2px;background:#e0e0e0;border-radius:1px"></div>
<div class="abs" style="left:2064.8px;top:866.4px;width:2.2px;height:2.2px;background:#e0e0e0;border-radius:1px"></div>
<div class="abs" style="left:1880px;top:880px;width:261px;height:1px;background:#454545;"></div>
<svg class="abs" style="left:1886.3px;top:894.8px;" width="9" height="6" viewBox="0 0 9 6"><path d="M.8 .8 L4.4 4.6 L8 .8" fill="none" stroke="#c4c4c4" stroke-width="1.2"/></svg>
<div class="t" style="left:1900.60px;top:892.08px;font-size:9.24px;line-height:9.24px;color:#ececec;transform-origin:0 0;transform:scaleX(1.1006);font-weight:bold;-webkit-text-stroke:0.12px #ececec;">Quick Actions</div>
<div class="abs" style="left:1889.1px;top:913px;width:182px;height:20.6px;background:#404040;border:1px solid #4a4a4a;border-radius:2px"></div>
<div class="t" style="left:1932.35px;top:919.03px;font-size:9.06px;line-height:9.06px;color:#ececec;transform-origin:0 0;transform:scaleX(1.1259);-webkit-text-stroke:0.22px #ececec;">Remove Background</div>
<div class="abs" style="left:1889.1px;top:942.4px;width:182px;height:20.6px;background:#404040;border:1px solid #4a4a4a;border-radius:2px"></div>
<div class="t" style="left:1946.05px;top:948.23px;font-size:9.06px;line-height:9.06px;color:#ececec;transform-origin:0 0;transform:scaleX(1.1684);-webkit-text-stroke:0.22px #ececec;">Select Subject</div>
<div class="t" style="left:1955.40px;top:975.70px;font-size:8.98px;line-height:8.98px;color:#d0d0d0;transform-origin:0 0;transform:scaleX(1.1601);-webkit-text-stroke:0.22px #d0d0d0;">View More</div>
<div class="abs" style="left:1955.4px;top:985.2px;width:49px;height:1px;background:#c8c8c8;"></div>
<div class="abs" style="left:1880px;top:1112.6px;width:276px;height:2px;background:#3e3e3e;"></div>
<div class="abs" style="left:1880px;top:1114.4px;width:276px;height:29.6px;background:#424242;"></div>
<div class="abs" style="left:1943.8px;top:1116px;width:44.6px;height:28.4px;background:#535353;"></div>
<div class="t" style="left:1888.70px;top:1125.14px;font-size:9.75px;line-height:9.75px;color:#b4b4b4;transform-origin:0 0;transform:scaleX(1.0320);font-weight:bold;-webkit-text-stroke:0.12px #b4b4b4;">Channels</div>
<div class="t" style="left:1952.60px;top:1125.14px;font-size:9.75px;line-height:9.75px;color:#f2f2f2;transform-origin:0 0;transform:scaleX(1.0054);font-weight:bold;-webkit-text-stroke:0.12px #f2f2f2;">Paths</div>
<svg class="abs" style="left:2140px;top:1125.6px;" width="11" height="8" viewBox="0 0 11 8"><path d="M0 .5 H10 M0 2.8 H10 M0 5.1 H10 M0 7.4 H10" stroke="#c2c2c2" stroke-width=".85"/></svg>
<div class="abs" style="left:1880px;top:1144px;width:276px;height:220px;background:#4b4b4b;"></div>
<div class="abs" style="left:1880px;top:1144px;width:276px;height:3px;background:#515151;"></div>
<div class="abs" style="left:1375.5px;top:397.3px;width:229.9000000000001px;height:245px;background:#535353;border-radius:3px 3px 0 0;box-shadow:0 1px 6px rgba(0,0,0,.45),0 0 0 .6px #1e1e1e"></div>
<div class="abs" style="left:1375.5px;top:397.3px;width:229.9000000000001px;height:12.7px;background:#424242;border-radius:3px 3px 0 0"></div>
<svg class="abs" style="left:1380.6px;top:401.4px;" width="7" height="7" viewBox="0 0 7 7"><path d="M.8 .8 L6 6 M6 .8 L.8 6" stroke="#d2d2d2" stroke-width="1.5"/></svg>
<svg class="abs" style="left:1591.4px;top:400.6px;" width="9" height="7" viewBox="0 0 9 7"><path d="M3.6 .8 L1.2 3.4 L3.6 6 M7.6 .8 L5.2 3.4 L7.6 6" fill="none" stroke="#c8c8c8" stroke-width="1.1"/></svg>
<div class="abs" style="left:1375.5px;top:410px;width:229.9000000000001px;height:27px;background:#424242;"></div>
<div class="abs" style="left:1375.5px;top:410px;width:51.09999999999991px;height:27.4px;background:#535353;"></div>
<div class="t" style="left:1384.90px;top:418.94px;font-size:9.75px;line-height:9.75px;color:#f2f2f2;transform-origin:0 0;transform:scaleX(1.0112);font-weight:bold;-webkit-text-stroke:0.12px #f2f2f2;">Layers</div>
<svg class="abs" style="left:1589.8px;top:419.8px;" width="11" height="8" viewBox="0 0 11 8"><path d="M0 .5 H10 M0 2.8 H10 M0 5.1 H10 M0 7.4 H10" stroke="#c8c8c8" stroke-width=".85"/></svg>
<div class="abs" style="left:1380px;top:447.1px;width:83.8px;height:16.2px;background:#454545;border:1px solid #3e3e3e;border-radius:2px"></div>
<svg class="abs" style="left:1388px;top:450.2px;" width="11" height="11" viewBox="0 0 11 11"><circle cx="4.2" cy="4.2" r="3.2" fill="none" stroke="#d6d6d6" stroke-width="1.3"/><path d="M6.6 6.6 L9.6 9.6" stroke="#d6d6d6" stroke-width="1.6" stroke-linecap="round"/></svg>
<div class="t" style="left:1400.70px;top:450.48px;font-size:9.48px;line-height:9.48px;color:#e4e4e4;transform-origin:0 0;transform:scaleX(1.0545);-webkit-text-stroke:0.22px #e4e4e4;">Kind</div>
<svg class="abs" style="left:1454px;top:453.4px;" width="8" height="6" viewBox="0 0 8 6"><path d="M.8 .8 L3.6 3.8 L6.4 .8" fill="none" stroke="#d0d0d0" stroke-width="1.2"/></svg>
<svg class="abs" style="left:1475.8px;top:450px;" width="13" height="10.4" viewBox="0 0 13 10.4"><rect x=".7" y=".7" width="11.2" height="8.8" fill="none" stroke="#d6d6d6" stroke-width="1.2"/><path d="M2.2 8 L4.4 5 L5.8 6.6 L7.4 4.6 L9.8 8Z" fill="#d6d6d6"/></svg>
<svg class="abs" style="left:1499px;top:449.4px;" width="12" height="12" viewBox="0 0 12 12"><circle cx="5.7" cy="5.6" r="4.6" fill="none" stroke="#d6d6d6" stroke-width="1.2"/><path d="M9 2.4 A4.6 4.6 0 0 1 2.4 9Z" fill="#d6d6d6"/></svg>
<svg class="abs" style="left:1522.6px;top:450.2px;" width="11" height="11" viewBox="0 0 11 11"><path d="M.4 .4 H10 V3 H9.2 C9 1.8 8.6 1.5 7.6 1.5 H6.2 V8.4 C6.2 9.2 6.6 9.4 7.6 9.4 V10.2 H2.8 V9.4 C3.8 9.4 4.2 9.2 4.2 8.4 V1.5 H2.8 C1.8 1.5 1.4 1.8 1.2 3 H.4Z" fill="#d6d6d6"/></svg>
<svg class="abs" style="left:1545.2px;top:449.6px;" width="13" height="12" viewBox="0 0 13 12"><rect x="2" y="2" width="8.4" height="7.6" fill="none" stroke="#d6d6d6" stroke-width="1.3"/><rect x=".2" y=".2" width="3" height="3" fill="#d6d6d6"/><rect x="9.2" y=".2" width="3" height="3" fill="#d6d6d6"/><rect x=".2" y="8.4" width="3" height="3" fill="#d6d6d6"/><rect x="9.2" y="8.4" width="3" height="3" fill="#d6d6d6"/></svg>
<svg class="abs" style="left:1569.4px;top:449.6px;" width="12" height="12" viewBox="0 0 12 12"><path d="M3.6 .8 H8 L10.6 3.4 V9.2 H6.4" fill="none" stroke="#d6d6d6" stroke-width="1.2"/><path d="M7.6 .8 V3.8 H10.6" fill="none" stroke="#d6d6d6" stroke-width="1"/><rect x=".6" y="5.8" width="5.4" height="5.4" fill="#d6d6d6"/></svg>
<div class="abs" style="left:1592.6px;top:447px;width:7.8px;height:16.4px;background:#3c3c3c;border-radius:4px"></div>
<div class="abs" style="left:1592.3px;top:446.8px;width:8.4px;height:8.4px;background:#e2e2e2;border-radius:5px"></div>
<div class="abs" style="left:1375.5px;top:467px;width:229.9000000000001px;height:1px;background:#444;"></div>
<div class="abs" style="left:1490px;top:475px;width:15.2px;height:14.4px;background:#383838;border-radius:0 2px 2px 0"></div>
<svg class="abs" style="left:1497.6px;top:479.6px;" width="7" height="6" viewBox="0 0 7 6"><path d="M.6 1 L3.2 4 L6 .6" fill="none" stroke="#cfcfcf" stroke-width="1.2"/></svg>
<div class="t" style="left:1509.90px;top:477.98px;font-size:9.48px;line-height:9.48px;color:#d0d0d0;transform-origin:0 0;transform:scaleX(1.0990);-webkit-text-stroke:0.22px #d0d0d0;">Opacity:</div>
<div class="abs" style="left:1551.6px;top:475px;width:33.2px;height:14.2px;background:#454545;border:1px solid #3e3e3e;border-radius:2px 0 0 2px"></div><div class="abs" style="left:1586.4px;top:475px;width:13px;height:14.2px;background:#454545;border:1px solid #3e3e3e;border-radius:0 2px 2px 0"></div><svg class="abs" style="left:1589.4px;top:479.6px;" width="8" height="6" viewBox="0 0 8 6"><path d="M.8 .8 L3.6 3.8 L6.4 .8" fill="none" stroke="#d0d0d0" stroke-width="1.2"/></svg>
<div class="t" style="left:1554.00px;top:477.98px;font-size:9.48px;line-height:9.48px;color:#ececec;transform-origin:0 0;transform:scaleX(1.0686);-webkit-text-stroke:0.22px #ececec;">100%</div>
<div class="abs" style="left:1375.5px;top:495px;width:229.9000000000001px;height:1px;background:#474747;"></div>
<svg class="abs" style="left:1498.6px;top:503.4px;" width="10" height="12" viewBox="0 0 10 12"><path d="M2.6 5.4 V3.6 a2.4 2.4 0 0 1 4.8 0 V5.4" fill="none" stroke="#d6d6d6" stroke-width="1.4"/><path fill-rule="evenodd" d="M.8 5.2 H9.2 V11.4 H.8Z M5 7.2 a1.1 1.1 0 1 0 .01 0Z" fill="#d6d6d6"/></svg>
<div class="t" style="left:1532.50px;top:504.88px;font-size:9.48px;line-height:9.48px;color:#d0d0d0;transform-origin:0 0;transform:scaleX(1.0585);-webkit-text-stroke:0.22px #d0d0d0;">Fill:</div>
<div class="abs" style="left:1551.6px;top:502px;width:33.2px;height:14.2px;background:#454545;border:1px solid #3e3e3e;border-radius:2px 0 0 2px"></div><div class="abs" style="left:1586.4px;top:502px;width:13px;height:14.2px;background:#454545;border:1px solid #3e3e3e;border-radius:0 2px 2px 0"></div><svg class="abs" style="left:1589.4px;top:506.6px;" width="8" height="6" viewBox="0 0 8 6"><path d="M.8 .8 L3.6 3.8 L6.4 .8" fill="none" stroke="#d0d0d0" stroke-width="1.2"/></svg>
<div class="t" style="left:1554.00px;top:504.88px;font-size:9.48px;line-height:9.48px;color:#ececec;transform-origin:0 0;transform:scaleX(1.0686);-webkit-text-stroke:0.22px #ececec;">100%</div>
<div class="abs" style="left:1375.5px;top:522.6px;width:229.9000000000001px;height:1px;background:#444;"></div>
<div class="abs" style="left:1375.5px;top:523.6px;width:215.0999999999999px;height:81px;background:#575757;"></div>
<div class="abs" style="left:1375.5px;top:524.9px;width:215.0999999999999px;height:39.2px;background:#6b6b6b;"></div>
<div class="t" style="left:1500.60px;top:539.98px;font-size:9.48px;line-height:9.48px;color:#f0f0f0;transform-origin:0 0;transform:scaleX(1.0780);-webkit-text-stroke:0.22px #f0f0f0;">Texture</div>
<div class="abs" style="left:1590.6px;top:523.6px;width:14.800000000000182px;height:87px;background:#4d4d4d;"></div>
<div class="abs" style="left:1375.5px;top:604.4px;width:229.9000000000001px;height:6.6px;background:#4a4a4a;"></div>
<div class="abs" style="left:1375.5px;top:610.6px;width:229.9000000000001px;height:1px;background:#3e3e3e;"></div>
<div class="abs" style="left:1500.4px;top:628px;width:1.8px;height:1.8px;background:#d0d0d0;"></div>
<svg class="abs" style="left:1514px;top:617.6px;" width="13" height="10" viewBox="0 0 13 10"><path d="M.4 1.8 a1 1 0 0 1 1-1 H4.6 L6 2.4 H11.4 a1 1 0 0 1 1 1 V8.6 a1 1 0 0 1 -1 1 H1.4 a1 1 0 0 1 -1-1Z" fill="#d6d6d6"/></svg>
<svg class="abs" style="left:1540.2px;top:616.6px;" width="13" height="12" viewBox="0 0 13 12"><rect x=".8" y=".8" width="10.6" height="10.4" rx="1.2" fill="none" stroke="#d6d6d6" stroke-width="1.3"/><path d="M6.1 3.4 V8.6 M3.5 6 H8.7" stroke="#d6d6d6" stroke-width="1.3"/></svg>
<svg class="abs" style="left:1567.2px;top:616px;" width="11" height="13" viewBox="0 0 11 13"><path d="M.4 2.6 H10.2 M3.6 2.4 V1 H7 V2.4" fill="none" stroke="#d6d6d6" stroke-width="1.2"/><path d="M1.4 3.8 H9.2 L8.6 12.2 H2Z" fill="#d6d6d6"/><path d="M3.8 5 V11 M5.3 5 V11 M6.8 5 V11" stroke="#535353" stroke-width=".7"/></svg>
<div class="abs" style="left:1375.5px;top:635px;width:229.9000000000001px;height:7.2px;background:#494949;"></div>
<div class="abs" style="left:1371.6px;top:469.2px;width:126.10000000000014px;height:559.0999999999999px;background:#303030;border-radius:6px;border:1px solid #4e4e4e;box-shadow:0 6px 18px rgba(0,0,0,.45),0 0 0 .5px #151515"></div>
<div class="abs" style="left:1384.5px;top:514.9px;width:100.2px;height:1px;background:#4d4d4d;"></div>
<div class="abs" style="left:1384.5px;top:617.7px;width:100.2px;height:1px;background:#4d4d4d;"></div>
<div class="abs" style="left:1384.5px;top:720.6px;width:100.2px;height:1px;background:#4d4d4d;"></div>
<div class="abs" style="left:1384.5px;top:860.0px;width:100.2px;height:1px;background:#4d4d4d;"></div>
<div class="abs" style="left:1384.5px;top:944.4px;width:100.2px;height:1px;background:#4d4d4d;"></div>
<div class="abs" style="left:1376.3px;top:642px;width:117px;height:19px;background:#2e5fc8;border-radius:4.5px"></div>
<div class="t" style="left:1391.70px;top:476.91px;font-size:10.50px;line-height:10.50px;color:#e8e8e8;transform-origin:0 0;transform:scaleX(1.0015);-webkit-text-stroke:0.26px #e8e8e8;">Normal</div>
<div class="t" style="left:1391.70px;top:495.41px;font-size:10.50px;line-height:10.50px;color:#e8e8e8;transform-origin:0 0;transform:scaleX(1.0015);-webkit-text-stroke:0.26px #e8e8e8;">Dissolve</div>
<div class="t" style="left:1391.70px;top:524.41px;font-size:10.50px;line-height:10.50px;color:#e8e8e8;transform-origin:0 0;transform:scaleX(1.0015);-webkit-text-stroke:0.26px #e8e8e8;">Darken</div>
<div class="t" style="left:1391.70px;top:542.91px;font-size:10.50px;line-height:10.50px;color:#e8e8e8;transform-origin:0 0;transform:scaleX(1.0015);-webkit-text-stroke:0.26px #e8e8e8;">Multiply</div>
<div class="t" style="left:1391.70px;top:561.31px;font-size:10.50px;line-height:10.50px;color:#e8e8e8;transform-origin:0 0;transform:scaleX(1.0015);-webkit-text-stroke:0.26px #e8e8e8;">Color Burn</div>
<div class="t" style="left:1391.70px;top:579.81px;font-size:10.50px;line-height:10.50px;color:#e8e8e8;transform-origin:0 0;transform:scaleX(1.0015);-webkit-text-stroke:0.26px #e8e8e8;">Linear Burn</div>
<div class="t" style="left:1391.70px;top:598.21px;font-size:10.50px;line-height:10.50px;color:#e8e8e8;transform-origin:0 0;transform:scaleX(1.0015);-webkit-text-stroke:0.26px #e8e8e8;">Darker Color</div>
<div class="t" style="left:1391.70px;top:627.31px;font-size:10.50px;line-height:10.50px;color:#e8e8e8;transform-origin:0 0;transform:scaleX(1.0015);-webkit-text-stroke:0.26px #e8e8e8;">Lighten</div>
<div class="t" style="left:1391.70px;top:645.81px;font-size:10.50px;line-height:10.50px;color:#ffffff;transform-origin:0 0;transform:scaleX(1.0015);-webkit-text-stroke:0.26px #ffffff;">Screen</div>
<div class="t" style="left:1391.70px;top:664.31px;font-size:10.50px;line-height:10.50px;color:#e8e8e8;transform-origin:0 0;transform:scaleX(1.0015);-webkit-text-stroke:0.26px #e8e8e8;">Color Dodge</div>
<div class="t" style="left:1391.70px;top:682.81px;font-size:10.50px;line-height:10.50px;color:#e8e8e8;transform-origin:0 0;transform:scaleX(1.0015);-webkit-text-stroke:0.26px #e8e8e8;">Linear Dodge (Add)</div>
<div class="t" style="left:1391.70px;top:701.21px;font-size:10.50px;line-height:10.50px;color:#e8e8e8;transform-origin:0 0;transform:scaleX(1.0015);-webkit-text-stroke:0.26px #e8e8e8;">Lighter Color</div>
<div class="t" style="left:1391.70px;top:730.41px;font-size:10.50px;line-height:10.50px;color:#e8e8e8;transform-origin:0 0;transform:scaleX(1.0015);-webkit-text-stroke:0.26px #e8e8e8;">Overlay</div>
<div class="t" style="left:1391.70px;top:748.81px;font-size:10.50px;line-height:10.50px;color:#e8e8e8;transform-origin:0 0;transform:scaleX(1.0015);-webkit-text-stroke:0.26px #e8e8e8;">Soft Light</div>
<div class="t" style="left:1391.70px;top:767.21px;font-size:10.50px;line-height:10.50px;color:#e8e8e8;transform-origin:0 0;transform:scaleX(1.0015);-webkit-text-stroke:0.26px #e8e8e8;">Hard Light</div>
<div class="t" style="left:1391.70px;top:785.61px;font-size:10.50px;line-height:10.50px;color:#e8e8e8;transform-origin:0 0;transform:scaleX(1.0015);-webkit-text-stroke:0.26px #e8e8e8;">Vivid Light</div>
<div class="t" style="left:1391.70px;top:804.01px;font-size:10.50px;line-height:10.50px;color:#e8e8e8;transform-origin:0 0;transform:scaleX(1.0015);-webkit-text-stroke:0.26px #e8e8e8;">Linear Light</div>
<div class="t" style="left:1391.70px;top:822.41px;font-size:10.50px;line-height:10.50px;color:#e8e8e8;transform-origin:0 0;transform:scaleX(1.0015);-webkit-text-stroke:0.26px #e8e8e8;">Pin Light</div>
<div class="t" style="left:1391.70px;top:840.81px;font-size:10.50px;line-height:10.50px;color:#e8e8e8;transform-origin:0 0;transform:scaleX(1.0015);-webkit-text-stroke:0.26px #e8e8e8;">Hard Mix</div>
<div class="t" style="left:1391.70px;top:870.01px;font-size:10.50px;line-height:10.50px;color:#e8e8e8;transform-origin:0 0;transform:scaleX(1.0015);-webkit-text-stroke:0.26px #e8e8e8;">Difference</div>
<div class="t" style="left:1391.70px;top:888.41px;font-size:10.50px;line-height:10.50px;color:#e8e8e8;transform-origin:0 0;transform:scaleX(1.0015);-webkit-text-stroke:0.26px #e8e8e8;">Exclusion</div>
<div class="t" style="left:1391.70px;top:906.81px;font-size:10.50px;line-height:10.50px;color:#e8e8e8;transform-origin:0 0;transform:scaleX(1.0015);-webkit-text-stroke:0.26px #e8e8e8;">Subtract</div>
<div class="t" style="left:1391.70px;top:925.21px;font-size:10.50px;line-height:10.50px;color:#e8e8e8;transform-origin:0 0;transform:scaleX(1.0015);-webkit-text-stroke:0.26px #e8e8e8;">Divide</div>
<div class="t" style="left:1391.70px;top:954.21px;font-size:10.50px;line-height:10.50px;color:#e8e8e8;transform-origin:0 0;transform:scaleX(1.0015);-webkit-text-stroke:0.26px #e8e8e8;">Hue</div>
<div class="t" style="left:1391.70px;top:972.61px;font-size:10.50px;line-height:10.50px;color:#e8e8e8;transform-origin:0 0;transform:scaleX(1.0015);-webkit-text-stroke:0.26px #e8e8e8;">Saturation</div>
<div class="t" style="left:1391.70px;top:991.01px;font-size:10.50px;line-height:10.50px;color:#e8e8e8;transform-origin:0 0;transform:scaleX(1.0015);-webkit-text-stroke:0.26px #e8e8e8;">Color</div>
<div class="t" style="left:1391.70px;top:1009.51px;font-size:10.50px;line-height:10.50px;color:#e8e8e8;transform-origin:0 0;transform:scaleX(1.0015);-webkit-text-stroke:0.26px #e8e8e8;">Luminosity</div>
<svg class="abs" style="left:1379.6px;top:478.6px;" width="9" height="9" viewBox="0 0 9 9"><path d="M1 4.8 L3.2 7.4 L7.4 1.2" fill="none" stroke="#e6e6e6" stroke-width="1.5"/></svg>
</div></div>
</body></html>
